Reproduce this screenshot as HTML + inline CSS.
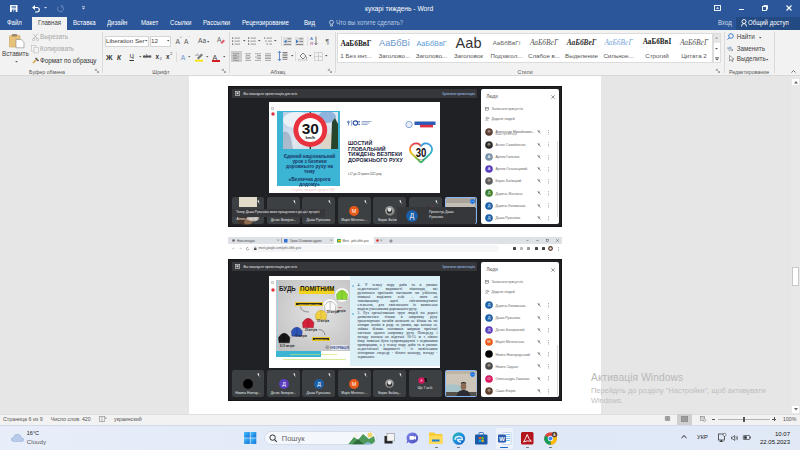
<!DOCTYPE html>
<html><head><meta charset="utf-8">
<style>
*{margin:0;padding:0;box-sizing:border-box}
html,body{width:800px;height:450px;overflow:hidden;background:#e6e6e6;font-family:"Liberation Sans",sans-serif}
.a{position:absolute}
.t{position:absolute;white-space:nowrap;line-height:1}
svg{overflow:visible}
</style></head><body>
<div class="a" style="left:0px;top:0px;width:800px;height:30px;background:#2b579a;"></div>
<svg class="a" style="left:10.2px;top:4.5px;" width="7.5" height="7" viewBox="0 0 7.5 7"><rect x="0" y="0" width="7.5" height="7" rx="0.4" fill="#fff"/><rect x="1.5" y="0.8" width="4.5" height="2.6" fill="#7f9cc8"/><rect x="1.8" y="4.6" width="3.9" height="2.4" fill="#2b579a"/><rect x="3.2" y="5.2" width="1" height="1.2" fill="#fff"/></svg>
<svg class="a" style="left:32px;top:5px;" width="9" height="7" viewBox="0 0 9 7"><path d="M1.5 2.5 H5.5 A2.3 2.3 0 0 1 5.5 7 H3" fill="none" stroke="#fff" stroke-width="1.2"/><path d="M0 2.5 L3 0 L3 5 Z" fill="#fff"/></svg>
<svg class="a" style="left:44px;top:7px;" width="3" height="2" viewBox="0 0 3 2"><path d="M0 0 H3 L1.5 1.6Z" fill="#dfe6f1"/></svg>
<svg class="a" style="left:57px;top:5px;" width="7" height="7" viewBox="0 0 7 7"><path d="M4.8 1.2 A2.9 2.9 0 1 1 1.6 1.6" fill="none" stroke="#6f8fbf" stroke-width="0.9"/><path d="M4 0 L6.2 1 L4.6 2.8Z" fill="#6f8fbf"/></svg>
<svg class="a" style="left:82px;top:6px;" width="3" height="4" viewBox="0 0 3 4"><rect x="0" y="0" width="3" height="0.6" fill="#dfe6f1"/><path d="M0 1.8 H3 L1.5 3.4Z" fill="#dfe6f1"/></svg>
<div class="t" style="left:365px;top:6.13px;font-size:6.7px;color:#fff;">кухарі тиждень - Word</div>
<svg class="a" style="left:714px;top:5px;" width="7" height="6" viewBox="0 0 7 6"><rect x="0.5" y="0.5" width="6" height="5" fill="none" stroke="#fff" stroke-width="0.9"/><path d="M2 3.8 L3.5 2 L5 3.8Z" fill="#fff"/></svg>
<div class="a" style="left:739px;top:9px;width:5px;height:1px;background:#fff;"></div>
<svg class="a" style="left:762px;top:5px;" width="6" height="6" viewBox="0 0 6 6"><rect x="0.5" y="1.5" width="4" height="4" fill="none" stroke="#fff" stroke-width="0.9"/><path d="M1.5 0.5 H5.5 V4.5" fill="none" stroke="#fff" stroke-width="0.9"/></svg>
<svg class="a" style="left:786px;top:5px;" width="6" height="6" viewBox="0 0 6 6"><path d="M0.5 0.5 L5.5 5.5 M5.5 0.5 L0.5 5.5" stroke="#fff" stroke-width="1.1"/></svg>
<div class="t" style="left:7px;top:20.41px;font-size:6.6px;color:#fff;;transform:scaleX(0.92);transform-origin:0 0">Файл</div>
<div class="a" style="left:32px;top:17px;width:35px;height:13px;background:#f2f2f2;"></div>
<div class="t" style="left:37.5px;top:20.41px;font-size:6.6px;color:#444;;transform:scaleX(0.92);transform-origin:0 0">Главная</div>
<div class="t" style="left:73px;top:20.41px;font-size:6.6px;color:#fff;;transform:scaleX(0.92);transform-origin:0 0">Вставка</div>
<div class="t" style="left:107px;top:20.41px;font-size:6.6px;color:#fff;;transform:scaleX(0.92);transform-origin:0 0">Дизайн</div>
<div class="t" style="left:141px;top:20.41px;font-size:6.6px;color:#fff;;transform:scaleX(0.92);transform-origin:0 0">Макет</div>
<div class="t" style="left:170px;top:20.41px;font-size:6.6px;color:#fff;;transform:scaleX(0.92);transform-origin:0 0">Ссылки</div>
<div class="t" style="left:203px;top:20.41px;font-size:6.6px;color:#fff;;transform:scaleX(0.92);transform-origin:0 0">Рассылки</div>
<div class="t" style="left:242px;top:20.41px;font-size:6.6px;color:#fff;;transform:scaleX(0.92);transform-origin:0 0">Рецензирование</div>
<div class="t" style="left:304px;top:20.41px;font-size:6.6px;color:#fff;;transform:scaleX(0.92);transform-origin:0 0">Вид</div>
<svg class="a" style="left:329px;top:20px;" width="5" height="7" viewBox="0 0 5 7"><circle cx="2.5" cy="2.3" r="2" fill="none" stroke="#cfdaea" stroke-width="0.8"/><path d="M1.5 4.5 V6 H3.5 V4.5" fill="none" stroke="#cfdaea" stroke-width="0.8"/></svg>
<div class="t" style="left:336px;top:20.41px;font-size:6.6px;color:#b9c9e2;;transform:scaleX(0.92);transform-origin:0 0">Что вы хотите сделать?</div>
<div class="t" style="left:718px;top:20.41px;font-size:6.6px;color:#d0dbec;;transform:scaleX(0.92);transform-origin:0 0">Вход</div>
<div class="a" style="left:736px;top:17px;width:64px;height:13px;background:#244a83;"></div>
<svg class="a" style="left:741px;top:19px;" width="6" height="8" viewBox="0 0 6 8"><circle cx="3" cy="2.5" r="2" fill="none" stroke="#fff" stroke-width="0.9"/><path d="M0.5 7.5 Q0.5 4.6 3 4.6 Q5.5 4.6 5.5 7.5" fill="none" stroke="#fff" stroke-width="0.9"/></svg>
<div class="t" style="left:748px;top:20.41px;font-size:6.6px;color:#fff;;transform:scaleX(0.92);transform-origin:0 0">Общий доступ</div>
<div class="a" style="left:0px;top:30px;width:800px;height:46px;background:#f2f2f2;"></div>
<div class="a" style="left:0px;top:75.2px;width:800px;height:0.9px;background:#d9d9d9;"></div>
<div class="a" style="left:101.5px;top:32px;width:1px;height:41px;background:#dadada;"></div>
<div class="a" style="left:228.5px;top:32px;width:1px;height:41px;background:#dadada;"></div>
<div class="a" style="left:334.5px;top:32px;width:1px;height:41px;background:#dadada;"></div>
<div class="a" style="left:723.5px;top:32px;width:1px;height:41px;background:#dadada;"></div>
<div class="a" style="left:774px;top:32px;width:1px;height:41px;background:#dadada;"></div>
<div class="t" style="left:-453.2px;width:1000px;text-align:center;top:69.99px;font-size:5.8px;color:#555;;transform:scaleX(0.91);transform-origin:500px 0">Буфер обмена</div>
<div class="t" style="left:-339px;width:1000px;text-align:center;top:69.99px;font-size:5.8px;color:#555;;transform:scaleX(0.91);transform-origin:500px 0">Шрифт</div>
<div class="t" style="left:-222px;width:1000px;text-align:center;top:69.99px;font-size:5.8px;color:#555;;transform:scaleX(0.91);transform-origin:500px 0">Абзац</div>
<div class="t" style="left:25px;width:1000px;text-align:center;top:69.99px;font-size:5.8px;color:#555;;transform:scaleX(0.91);transform-origin:500px 0">Стили</div>
<div class="t" style="left:249px;width:1000px;text-align:center;top:69.99px;font-size:5.8px;color:#555;;transform:scaleX(0.91);transform-origin:500px 0">Редактирование</div>
<svg class="a" style="left:95px;top:69px;" width="4" height="4" viewBox="0 0 4 4"><path d="M0.3 0.3 H2 M0.3 0.3 V2 M1 1 L3.5 3.5 M3.5 2 V3.5 H2" fill="none" stroke="#777" stroke-width="0.6"/></svg>
<svg class="a" style="left:222px;top:69px;" width="4" height="4" viewBox="0 0 4 4"><path d="M0.3 0.3 H2 M0.3 0.3 V2 M1 1 L3.5 3.5 M3.5 2 V3.5 H2" fill="none" stroke="#777" stroke-width="0.6"/></svg>
<svg class="a" style="left:328px;top:69px;" width="4" height="4" viewBox="0 0 4 4"><path d="M0.3 0.3 H2 M0.3 0.3 V2 M1 1 L3.5 3.5 M3.5 2 V3.5 H2" fill="none" stroke="#777" stroke-width="0.6"/></svg>
<svg class="a" style="left:716px;top:69px;" width="4" height="4" viewBox="0 0 4 4"><path d="M0.3 0.3 H2 M0.3 0.3 V2 M1 1 L3.5 3.5 M3.5 2 V3.5 H2" fill="none" stroke="#777" stroke-width="0.6"/></svg>
<svg class="a" style="left:9px;top:33px;" width="16" height="15" viewBox="0 0 16 15"><rect x="0.5" y="2.5" width="10.5" height="11.5" rx="0.8" fill="#e8c27a" stroke="#c9a45e" stroke-width="0.6"/><rect x="3" y="1" width="5" height="2.6" rx="0.6" fill="#9b8a6a"/><path d="M7 6.5 H12.3 L15 9.2 V14.8 H7 Z" fill="#fff" stroke="#888" stroke-width="0.6"/></svg>
<div class="t" style="left:2px;top:51.27px;font-size:6.3px;color:#444;">Вставить</div>
<svg class="a" style="left:15px;top:61.2px;" width="3" height="2" viewBox="0 0 3 2"><path d="M0 0 H3 L1.5 1.6Z" fill="#666"/></svg>
<svg class="a" style="left:31.5px;top:33px;" width="7" height="8" viewBox="0 0 7 8"><path d="M1 0.5 L5.5 6 M6 0.5 L1.5 6" stroke="#aaa" stroke-width="0.7"/><circle cx="1.5" cy="6.5" r="1.2" fill="none" stroke="#aaa" stroke-width="0.6"/><circle cx="5.5" cy="6.5" r="1.2" fill="none" stroke="#aaa" stroke-width="0.6"/></svg>
<div class="t" style="left:40px;top:34.47px;font-size:6.3px;color:#a6a6a6;">Вырезать</div>
<svg class="a" style="left:31px;top:45px;" width="8" height="8" viewBox="0 0 8 8"><rect x="0.5" y="0.5" width="4.5" height="5.5" fill="#f3f3f3" stroke="#bbb" stroke-width="0.6"/><rect x="3" y="2.5" width="4.5" height="5.5" fill="#f3f3f3" stroke="#bbb" stroke-width="0.6"/></svg>
<div class="t" style="left:40px;top:46.47px;font-size:6.3px;color:#a6a6a6;">Копировать</div>
<svg class="a" style="left:31.5px;top:57px;" width="7" height="7" viewBox="0 0 7 7"><path d="M1 6 L4 3" stroke="#d8a640" stroke-width="1.6"/><path d="M3.5 1 L6.5 4" stroke="#555" stroke-width="1.5"/></svg>
<div class="t" style="left:40px;top:58.47px;font-size:6.3px;color:#333;">Формат по образцу</div>
<div class="a" style="left:104.5px;top:36px;width:44px;height:10.5px;background:#fff;border:1px solid #d4d4d4"></div>
<div class="t" style="left:106px;top:38.45px;font-size:6.2px;color:#444;">Liberation Ser</div>
<svg class="a" style="left:145px;top:40px;" width="2.5" height="2" viewBox="0 0 2.5 2"><path d="M0 0 H2.5 L1.25 1.4Z" fill="#555"/></svg>
<div class="a" style="left:149.5px;top:36px;width:21px;height:10.5px;background:#fff;border:1px solid #d4d4d4"></div>
<div class="t" style="left:151px;top:38.45px;font-size:6.2px;color:#444;">12</div>
<svg class="a" style="left:167px;top:40px;" width="2.5" height="2" viewBox="0 0 2.5 2"><path d="M0 0 H2.5 L1.25 1.4Z" fill="#555"/></svg>
<div class="t" style="left:175.5px;top:39.01px;font-size:6.6px;color:#555;">A</div>
<div class="t" style="left:180px;top:37.24px;font-size:3.5px;color:#555;">^</div>
<div class="t" style="left:184px;top:39.01px;font-size:6.6px;color:#555;">A</div>
<div class="t" style="left:188.6px;top:37.24px;font-size:3.5px;color:#555;">ˇ</div>
<div class="t" style="left:198px;top:38.41px;font-size:6.6px;color:#555;">Aa</div>
<svg class="a" style="left:206.5px;top:40.5px;" width="2.5" height="2" viewBox="0 0 2.5 2"><path d="M0 0 H2.5 L1.25 1.4Z" fill="#555"/></svg>
<svg class="a" style="left:217px;top:36px;" width="8" height="9" viewBox="0 0 8 9"><text x="0" y="6" font-size="6.5" font-family="Liberation Sans" fill="#666">A</text><path d="M3.5 6.5 L6.5 3.5 L8 5 L5 8Z" fill="#e0606a"/></svg>
<div class="t" style="left:106px;top:54.01px;font-size:7.2px;color:#333;font-weight:bold">Ж</div>
<div class="t" style="left:117px;top:54.51px;font-size:6.6px;color:#333;font-weight:bold;font-style:italic">К</div>
<div class="t" style="left:129.5px;top:54.01px;font-size:6.6px;color:#333;text-decoration:underline">Ч</div>
<svg class="a" style="left:138.5px;top:56.2px;" width="2.5" height="2" viewBox="0 0 2.5 2"><path d="M0 0 H2.5 L1.25 1.4Z" fill="#666"/></svg>
<div class="t" style="left:143px;top:55.24px;font-size:4.8px;color:#555;text-decoration:line-through;font-weight:bold">abc</div>
<div class="t" style="left:155.5px;top:54.47px;font-size:6.3px;color:#333;font-weight:bold">x</div>
<div class="t" style="left:159.8px;top:57.84px;font-size:3.5px;color:#333;">2</div>
<div class="t" style="left:166px;top:54.47px;font-size:6.3px;color:#333;font-weight:bold">x</div>
<div class="t" style="left:170.3px;top:52.84px;font-size:3.5px;color:#333;">2</div>
<div class="a" style="left:175.5px;top:52.2px;width:1px;height:10px;background:#dcdcdc;"></div>
<div class="t" style="left:180.5px;top:54.37px;font-size:7px;color:#8fb2dd;font-weight:bold">A</div>
<svg class="a" style="left:188px;top:56.2px;" width="2.5" height="2" viewBox="0 0 2.5 2"><path d="M0 0 H2.5 L1.25 1.4Z" fill="#666"/></svg>
<svg class="a" style="left:195px;top:52.2px;" width="9" height="10" viewBox="0 0 9 10"><path d="M2 6 L6.5 1.5 L8 3 L3.5 7.5Z" fill="#777"/><text x="0" y="4" font-size="3.5" font-family="Liberation Sans" fill="#888">ab</text><rect x="0" y="7.8" width="8" height="1.8" fill="#f5e400"/></svg>
<svg class="a" style="left:205.5px;top:56.2px;" width="2.5" height="2" viewBox="0 0 2.5 2"><path d="M0 0 H2.5 L1.25 1.4Z" fill="#666"/></svg>
<div class="t" style="left:212.5px;top:53.67px;font-size:7px;color:#444;">A</div>
<div class="a" style="left:212px;top:60.4px;width:8px;height:1.6px;background:#d42020;"></div>
<svg class="a" style="left:222.5px;top:56.2px;" width="2.5" height="2" viewBox="0 0 2.5 2"><path d="M0 0 H2.5 L1.25 1.4Z" fill="#666"/></svg>
<svg class="a" style="left:232px;top:37px;" width="9" height="8" viewBox="0 0 9 8"><rect x="0" y="0.5" width="1.2" height="1.2" fill="#555"/><rect x="2.5" y="0.7" width="5.5" height="0.7" fill="#777"/><rect x="0" y="3.5" width="1.2" height="1.2" fill="#555"/><rect x="2.5" y="3.7" width="5.5" height="0.7" fill="#777"/><rect x="0" y="6.5" width="1.2" height="1.2" fill="#555"/><rect x="2.5" y="6.7" width="5.5" height="0.7" fill="#777"/></svg>
<svg class="a" style="left:242.5px;top:40px;" width="2.5" height="2" viewBox="0 0 2.5 2"><path d="M0 0 H2.5 L1.25 1.4Z" fill="#555"/></svg>
<svg class="a" style="left:248px;top:37px;" width="9" height="8" viewBox="0 0 9 8"><rect x="0" y="0.4" width="1.2" height="1.4" fill="#666"/><rect x="2.5" y="0.7" width="5.5" height="0.7" fill="#777"/><rect x="0" y="3.4" width="1.2" height="1.4" fill="#666"/><rect x="2.5" y="3.7" width="5.5" height="0.7" fill="#777"/><rect x="0" y="6.4" width="1.2" height="1.4" fill="#666"/><rect x="2.5" y="6.7" width="5.5" height="0.7" fill="#777"/></svg>
<svg class="a" style="left:258px;top:40px;" width="2.5" height="2" viewBox="0 0 2.5 2"><path d="M0 0 H2.5 L1.25 1.4Z" fill="#555"/></svg>
<svg class="a" style="left:264px;top:37px;" width="9" height="8" viewBox="0 0 9 8"><rect x="0.0" y="0.5" width="1.2" height="1.2" fill="#777"/><rect x="2.5" y="0.7" width="5.5" height="0.7" fill="#777"/><rect x="1.3" y="3.5" width="1.2" height="1.2" fill="#777"/><rect x="3.8" y="3.7" width="4.2" height="0.7" fill="#777"/><rect x="2.6" y="6.5" width="1.2" height="1.2" fill="#777"/><rect x="5.1" y="6.7" width="2.9" height="0.7" fill="#777"/></svg>
<svg class="a" style="left:274px;top:40px;" width="2.5" height="2" viewBox="0 0 2.5 2"><path d="M0 0 H2.5 L1.25 1.4Z" fill="#555"/></svg>
<div class="a" style="left:280.5px;top:36px;width:1px;height:10px;background:#dcdcdc;"></div>
<div class="a" style="left:283px;top:36.5px;width:9px;height:9px;background:#dedede;"></div>
<svg class="a" style="left:284px;top:37.5px;" width="7" height="7" viewBox="0 0 7 7"><path d="M0 3.5 L2.5 1.8 V5.2Z" fill="#2e6fc0"/><rect x="3.5" y="0.5" width="3.5" height="0.7" fill="#666"/><rect x="3.5" y="3" width="3.5" height="0.7" fill="#666"/><rect x="0" y="6" width="7" height="0.7" fill="#666"/></svg>
<div class="a" style="left:294.5px;top:36.5px;width:9px;height:9px;background:#dedede;"></div>
<svg class="a" style="left:295.5px;top:37.5px;" width="7" height="7" viewBox="0 0 7 7"><path d="M2.5 3.5 L0 1.8 V5.2Z" fill="#2e6fc0"/><rect x="3.5" y="0.5" width="3.5" height="0.7" fill="#666"/><rect x="3.5" y="3" width="3.5" height="0.7" fill="#666"/><rect x="0" y="6" width="7" height="0.7" fill="#666"/></svg>
<div class="a" style="left:306.5px;top:36px;width:1px;height:10px;background:#dcdcdc;"></div>
<svg class="a" style="left:310px;top:36px;" width="8" height="10" viewBox="0 0 8 10"><text x="0" y="4.3" font-size="4.3" font-family="Liberation Sans" fill="#3a6fbf">A</text><text x="0" y="9" font-size="4.3" font-family="Liberation Sans" fill="#a0338f">Я</text><path d="M6 0.5 V8.5 M4.6 7 L6 8.8 L7.4 7" fill="none" stroke="#555" stroke-width="0.7"/></svg>
<div class="t" style="left:325.5px;top:38.07px;font-size:7px;color:#555;">¶</div>
<div class="a" style="left:230.5px;top:51px;width:11px;height:10.5px;background:#cdcdcd;"></div>
<svg class="a" style="left:233px;top:52.5px;" width="6" height="8" viewBox="0 0 6 8"><rect x="0" y="0.5" width="6" height="0.7" fill="#888"/><rect x="0" y="2.1" width="4" height="0.7" fill="#888"/><rect x="0" y="3.7" width="6" height="0.7" fill="#888"/><rect x="0" y="5.300000000000001" width="4" height="0.7" fill="#888"/><rect x="0" y="6.9" width="6" height="0.7" fill="#888"/></svg>
<svg class="a" style="left:244.5px;top:52.5px;" width="6" height="8" viewBox="0 0 6 8"><rect x="0.0" y="0.5" width="6" height="0.7" fill="#888"/><rect x="1.0" y="2.1" width="4" height="0.7" fill="#888"/><rect x="0.0" y="3.7" width="6" height="0.7" fill="#888"/><rect x="1.0" y="5.300000000000001" width="4" height="0.7" fill="#888"/><rect x="0.0" y="6.9" width="6" height="0.7" fill="#888"/></svg>
<svg class="a" style="left:254.5px;top:52.5px;" width="6" height="8" viewBox="0 0 6 8"><rect x="0" y="0.5" width="6" height="0.7" fill="#888"/><rect x="2" y="2.1" width="4" height="0.7" fill="#888"/><rect x="0" y="3.7" width="6" height="0.7" fill="#888"/><rect x="2" y="5.300000000000001" width="4" height="0.7" fill="#888"/><rect x="0" y="6.9" width="6" height="0.7" fill="#888"/></svg>
<svg class="a" style="left:265px;top:52.5px;" width="6" height="8" viewBox="0 0 6 8"><rect x="0" y="0.5" width="6" height="0.7" fill="#888"/><rect x="0" y="2.1" width="6" height="0.7" fill="#888"/><rect x="0" y="3.7" width="6" height="0.7" fill="#888"/><rect x="0" y="5.300000000000001" width="6" height="0.7" fill="#888"/><rect x="0" y="6.9" width="6" height="0.7" fill="#888"/></svg>
<svg class="a" style="left:278px;top:51px;" width="12" height="10" viewBox="0 0 12 10"><path d="M1.5 0.5 V9.5 M0 2 L1.5 0.3 L3 2 M0 8 L1.5 9.7 L3 8" fill="none" stroke="#3a6fbf" stroke-width="0.8"/><rect x="4.5" y="1.0" width="5" height="0.8" fill="#666"/><rect x="4.5" y="2.7" width="5" height="0.8" fill="#666"/><rect x="4.5" y="4.4" width="5" height="0.8" fill="#666"/><rect x="4.5" y="6.1" width="5" height="0.8" fill="#666"/><rect x="4.5" y="7.8" width="5" height="0.8" fill="#666"/></svg>
<svg class="a" style="left:290.5px;top:55px;" width="2.5" height="2" viewBox="0 0 2.5 2"><path d="M0 0 H2.5 L1.25 1.4Z" fill="#555"/></svg>
<div class="a" style="left:294.5px;top:51px;width:1px;height:10px;background:#dcdcdc;"></div>
<svg class="a" style="left:298px;top:51px;" width="10" height="10" viewBox="0 0 10 10"><path d="M2 5 L5 2 L8 5 L5 8Z" fill="none" stroke="#666" stroke-width="0.8"/><path d="M8 5.5 Q9 7 8.3 7.8" fill="none" stroke="#666" stroke-width="0.7"/><rect x="0.5" y="8.7" width="8.5" height="1.2" fill="#fff" stroke="#aaa" stroke-width="0.4"/></svg>
<svg class="a" style="left:309px;top:55px;" width="2.5" height="2" viewBox="0 0 2.5 2"><path d="M0 0 H2.5 L1.25 1.4Z" fill="#555"/></svg>
<svg class="a" style="left:314px;top:51.5px;" width="9" height="9" viewBox="0 0 9 9"><rect x="0.5" y="0.5" width="8" height="8" fill="none" stroke="#999" stroke-width="0.6" stroke-dasharray="0.8 0.6"/><path d="M4.5 0.5 V8.5 M0.5 4.5 H8.5" stroke="#999" stroke-width="0.6" stroke-dasharray="0.8 0.6"/></svg>
<svg class="a" style="left:325px;top:55px;" width="2.5" height="2" viewBox="0 0 2.5 2"><path d="M0 0 H2.5 L1.25 1.4Z" fill="#555"/></svg>
<div class="a" style="left:336.5px;top:32.5px;width:376px;height:30.5px;background:#fff;border:1px solid #dcdcdc"></div>
<div class="a" style="left:712.5px;top:32.5px;width:8px;height:30.5px;background:#fff;border:1px solid #dcdcdc"></div>
<div class="a" style="left:713.5px;top:33.5px;width:6px;height:9px;background:#e6e6e6;"></div>
<svg class="a" style="left:715px;top:37px;" width="3" height="2" viewBox="0 0 3 2"><path d="M0 1.6 H3 L1.5 0Z" fill="#888"/></svg>
<svg class="a" style="left:715px;top:48px;" width="3" height="2" viewBox="0 0 3 2"><path d="M0 0 H3 L1.5 1.6Z" fill="#555"/></svg>
<svg class="a" style="left:714.5px;top:57px;" width="4" height="4" viewBox="0 0 4 4"><rect x="0" y="0" width="4" height="0.6" fill="#555"/><path d="M0 1.6 H4 L2 3.4Z" fill="#555"/></svg>
<div class="t" style="left:-144px;width:1000px;text-align:center;top:39.54px;font-size:7.4px;color:#333;font-family:'Liberation Serif';font-weight:bold;color:#222">АаБбВвГ</div>
<div class="t" style="left:-144px;width:1000px;text-align:center;top:53.15px;font-size:6.2px;color:#555;">1 Без инт...</div>
<div class="t" style="left:-105.69999999999999px;width:1000px;text-align:center;top:39.21px;font-size:9.2px;color:#333;color:#6a96c8">АаБбВі</div>
<div class="t" style="left:-105.69999999999999px;width:1000px;text-align:center;top:53.15px;font-size:6.2px;color:#555;">Заголово...</div>
<div class="t" style="left:-68.5px;width:1000px;text-align:center;top:39.71px;font-size:7.2px;color:#333;color:#5b9bd5">АаБбВвГ</div>
<div class="t" style="left:-68.5px;width:1000px;text-align:center;top:53.15px;font-size:6.2px;color:#555;">Заголово...</div>
<div class="t" style="left:-31.5px;width:1000px;text-align:center;top:36.03px;font-size:14.5px;color:#333;color:#333">Ааb</div>
<div class="t" style="left:-31.5px;width:1000px;text-align:center;top:53.15px;font-size:6.2px;color:#555;">Заголовок</div>
<div class="t" style="left:6.5px;width:1000px;text-align:center;top:40.25px;font-size:6.2px;color:#333;color:#666">АаБбВвГї</div>
<div class="t" style="left:6.5px;width:1000px;text-align:center;top:53.15px;font-size:6.2px;color:#555;">Подзагол...</div>
<div class="t" style="left:44px;width:1000px;text-align:center;top:39.24px;font-size:7.4px;color:#333;font-family:'Liberation Serif';font-style:italic;color:#555">АаБбВеГ</div>
<div class="t" style="left:44px;width:1000px;text-align:center;top:53.15px;font-size:6.2px;color:#555;">Слабое в...</div>
<div class="t" style="left:81.5px;width:1000px;text-align:center;top:39.24px;font-size:7.4px;color:#333;font-family:'Liberation Serif';font-style:italic;font-weight:bold;color:#333">АаБбВеГ</div>
<div class="t" style="left:81.5px;width:1000px;text-align:center;top:53.15px;font-size:6.2px;color:#555;">Выделение</div>
<div class="t" style="left:118.5px;width:1000px;text-align:center;top:39.24px;font-size:7.4px;color:#333;font-family:'Liberation Serif';font-style:italic;color:#7aa7d8">АаБбВеГ</div>
<div class="t" style="left:118.5px;width:1000px;text-align:center;top:53.15px;font-size:6.2px;color:#555;">Сильное...</div>
<div class="t" style="left:157px;width:1000px;text-align:center;top:39.41px;font-size:7.2px;color:#333;font-family:'Liberation Serif';font-weight:bold;color:#222">АаБбВвІ</div>
<div class="t" style="left:157px;width:1000px;text-align:center;top:53.15px;font-size:6.2px;color:#555;">Строгий</div>
<div class="t" style="left:194px;width:1000px;text-align:center;top:39.24px;font-size:7.4px;color:#333;font-family:'Liberation Serif';font-style:italic;color:#555">АаБбВеГ</div>
<div class="t" style="left:194px;width:1000px;text-align:center;top:53.15px;font-size:6.2px;color:#555;">Цитата 2</div>
<svg class="a" style="left:727px;top:33.2px;" width="7" height="7" viewBox="0 0 7 7"><circle cx="4" cy="3" r="2.3" fill="none" stroke="#2e6fc0" stroke-width="0.9"/><path d="M2.4 4.6 L0.5 6.5" stroke="#2e6fc0" stroke-width="1"/></svg>
<div class="t" style="left:736.7px;top:34.47px;font-size:6.3px;color:#444;">Найти</div>
<svg class="a" style="left:759px;top:36.5px;" width="2.5" height="2" viewBox="0 0 2.5 2"><path d="M0 0 H2.5 L1.25 1.4Z" fill="#555"/></svg>
<svg class="a" style="left:727px;top:44.5px;" width="8" height="7" viewBox="0 0 8 7"><text x="0" y="4" font-size="4" font-family="Liberation Sans" fill="#3a6fbf">ab</text><path d="M1 5 H6 M4.5 4 L6 5 L4.5 6" fill="none" stroke="#777" stroke-width="0.6"/></svg>
<div class="t" style="left:736.7px;top:45.67px;font-size:6.3px;color:#444;">Заменить</div>
<svg class="a" style="left:728.5px;top:55px;" width="6" height="7" viewBox="0 0 6 7"><path d="M0.5 0.5 V6 L2 4.6 L3.2 6.8 L4 6.4 L3 4.3 L5 4.2Z" fill="#fff" stroke="#666" stroke-width="0.6"/></svg>
<div class="t" style="left:736.7px;top:56.47px;font-size:6.3px;color:#444;">Выделить</div>
<svg class="a" style="left:766px;top:58.5px;" width="2.5" height="2" viewBox="0 0 2.5 2"><path d="M0 0 H2.5 L1.25 1.4Z" fill="#555"/></svg>
<svg class="a" style="left:791px;top:70px;" width="5" height="3" viewBox="0 0 5 3"><path d="M0.5 2.5 L2.5 0.5 L4.5 2.5" fill="none" stroke="#555" stroke-width="0.8"/></svg>
<div class="a" style="left:0px;top:76px;width:800px;height:338px;background:#e6e6e6;"></div>
<div class="a" style="left:189px;top:76px;width:412px;height:338px;background:#fff;"></div>
<div class="a" style="left:791px;top:76px;width:9px;height:338px;background:#e8e8e8;"></div>
<div class="a" style="left:792px;top:78.5px;width:7px;height:6.5px;background:#fff;"></div>
<svg class="a" style="left:793.5px;top:80.5px;" width="4" height="3" viewBox="0 0 4 3"><path d="M0 2.5 H4 L2 0Z" fill="#666"/></svg>
<div class="a" style="left:792px;top:266.5px;width:7px;height:19.5px;background:#fff;border:1px solid #c8c8c8"></div>
<div class="a" style="left:792px;top:405.5px;width:7px;height:7px;background:#fff;"></div>
<svg class="a" style="left:793.5px;top:407.5px;" width="4" height="3" viewBox="0 0 4 3"><path d="M0 0 H4 L2 2.5Z" fill="#666"/></svg>
<div class="a" style="left:228px;top:86px;width:334px;height:141px;background:#202124;border:1px solid #131416"></div>
<div class="a" style="left:232px;top:89px;width:245px;height:9px;background:#35373a;border-radius:1px"></div>
<svg class="a" style="left:235px;top:91px;" width="5" height="5" viewBox="0 0 5 5"><rect x="0.3" y="0.3" width="4.4" height="4" fill="none" stroke="#ddd" stroke-width="0.6"/><rect x="1.5" y="1.3" width="2" height="2" fill="#ddd"/></svg>
<div class="t" style="left:243.5px;top:92.81px;font-size:3.3px;color:#e8eaed;">Вы показуєте презентацію для всіх</div>
<div class="t" style="left:-525px;width:1000px;text-align:right;top:92.69px;font-size:3.2px;color:#a8c7fa;">Зупинити презентацію</div>
<div class="a" style="left:268.5px;top:102px;width:171px;height:91px;background:#fff;"></div>
<div class="a" style="left:271px;top:106.5px;width:3px;height:3px;background:#eee;border:0.5px solid #ccc"></div>
<svg class="a" style="left:270.5px;top:111.5px;" width="4" height="4" viewBox="0 0 4 4"><circle cx="2" cy="2" r="1.7" fill="#e0323c"/></svg>
<div class="a" style="left:277.2px;top:111px;width:63.3px;height:75px;background:#3cb4d4;"></div>
<svg class="a" style="left:282.5px;top:112px;" width="55" height="37" viewBox="0 0 55 37"><defs><linearGradient id="sky" x1="0" y1="0" x2="1" y2="1"><stop offset="0" stop-color="#b8cde6"/><stop offset="0.5" stop-color="#dfe7f0"/><stop offset="1" stop-color="#c9d2dc"/></linearGradient></defs>
<rect width="55" height="37" fill="url(#sky)"/>
<ellipse cx="14" cy="8" rx="14" ry="8" fill="#f1f4f8" opacity="0.9"/><ellipse cx="44" cy="5" rx="9" ry="6" fill="#6f9fd6" opacity="0.7"/>
<path d="M0 37 V20 Q5 18 8 26 L10 37Z" fill="#8aa0b8" opacity="0.6"/>
<rect x="38" y="22" width="12" height="15" fill="#ddd6c8"/>
<path d="M48 37 L49 10 L52 6 L55 12 V37Z" fill="#27452b"/>
<rect x="26.6" y="0" width="1.4" height="37" fill="#333"/>
<circle cx="27.3" cy="18" r="16.9" fill="#e8323e"/><circle cx="27.3" cy="18" r="12" fill="#fff"/>
<text x="27.3" y="22" font-size="15.5" text-anchor="middle" font-family="Liberation Sans" font-weight="bold" fill="#151515">30</text>
<text x="27.3" y="26.8" font-size="4.2" text-anchor="middle" font-family="Liberation Sans" font-weight="bold" fill="#151515">km/h</text></svg>
<div class="t" style="left:-190.5px;width:1000px;text-align:center;top:155.42px;font-size:4.7px;color:#1a3566;font-weight:bold">Єдиний національний</div>
<div class="t" style="left:-190.5px;width:1000px;text-align:center;top:160.42px;font-size:4.7px;color:#1a3566;font-weight:bold">урок з безпеки</div>
<div class="t" style="left:-190.5px;width:1000px;text-align:center;top:165.42px;font-size:4.7px;color:#1a3566;font-weight:bold">дорожнього руху на</div>
<div class="t" style="left:-190.5px;width:1000px;text-align:center;top:170.42px;font-size:4.7px;color:#1a3566;font-weight:bold">тему</div>
<div class="t" style="left:-190.5px;width:1000px;text-align:center;top:177.52px;font-size:4.7px;color:#1a3566;font-weight:bold">«Безпечна дорога</div>
<div class="t" style="left:-190.5px;width:1000px;text-align:center;top:182.52px;font-size:4.7px;color:#1a3566;font-weight:bold">додому»</div>
<div class="t" style="left:-187px;width:1000px;text-align:center;top:188.76px;font-size:3px;color:#eec5cc;">Сторінка предмета уроку з ПДР</div>
<svg class="a" style="left:347px;top:120px;" width="30" height="7" viewBox="0 0 30 7"><path d="M1.5 0.5 V5.5 M0 1 Q1.5 6 3 1" fill="none" stroke="#2b4ea0" stroke-width="0.6"/><rect x="4.6" y="0" width="0.5" height="6" fill="#2b4ea0"/><circle cx="8.5" cy="3" r="2.2" fill="none" stroke="#2b4ea0" stroke-width="1.2"/><rect x="11.5" y="1" width="1.3" height="1.3" fill="#2b4ea0"/><rect x="11.5" y="3.8" width="1.3" height="1.3" fill="#2b4ea0"/><rect x="14.5" y="1" width="10" height="0.8" fill="#8a9ac8"/><rect x="14.5" y="2.6" width="8" height="0.8" fill="#8a9ac8"/><rect x="14.5" y="4.2" width="6" height="0.8" fill="#8a9ac8"/></svg>
<svg class="a" style="left:404.5px;top:120.5px;" width="31" height="7" viewBox="0 0 31 7"><circle cx="4" cy="3.5" r="3.2" fill="#e8eef8" stroke="#5b8bd0" stroke-width="0.7"/><rect x="9.5" y="0.5" width="21" height="3.5" fill="#2a5bb8"/><rect x="15" y="3.8" width="13" height="2.6" fill="#e03040"/></svg>
<div class="t" style="left:348px;top:141.11px;font-size:5.3px;color:#1b2340;font-weight:bold;letter-spacing:0.05px">ШОСТИЙ</div>
<div class="t" style="left:348px;top:146.71px;font-size:5.3px;color:#1b2340;font-weight:bold;letter-spacing:0.05px">ГЛОБАЛЬНИЙ</div>
<div class="t" style="left:348px;top:152.31px;font-size:5.3px;color:#1b2340;font-weight:bold;letter-spacing:0.05px">ТИЖДЕНЬ БЕЗПЕКИ</div>
<div class="t" style="left:348px;top:157.91px;font-size:5.3px;color:#1b2340;font-weight:bold;letter-spacing:0.05px">ДОРОЖНЬОГО РУХУ</div>
<div class="t" style="left:348px;top:174.30px;font-size:2.6px;color:#444;">з 17 до 23 травня 2021 року</div>
<svg class="a" style="left:409px;top:141.5px;" width="24" height="22" viewBox="0 0 24 22"><defs><linearGradient id="hgl" x1="0" y1="0" x2="0" y2="1"><stop offset="0" stop-color="#e23a52"/><stop offset="0.5" stop-color="#f4c20d"/><stop offset="1" stop-color="#3cb060"/></linearGradient><linearGradient id="hgr" x1="0" y1="0" x2="0" y2="1"><stop offset="0" stop-color="#3a9ae0"/><stop offset="0.5" stop-color="#2fb7c8"/><stop offset="1" stop-color="#3cb060"/></linearGradient></defs><path d="M12 20.5 L3 12 Q0 8.5 1.5 5 Q4 0.8 8.5 1.5 Q11 2 12 4.5" fill="none" stroke="url(#hgl)" stroke-width="1.8"/><path d="M12 20.5 L21 12 Q24 8.5 22.5 5 Q20 0.8 15.5 1.5 Q13 2 12 4.5" fill="none" stroke="url(#hgr)" stroke-width="1.8"/><text x="15" y="15.5" font-size="12" text-anchor="middle" font-family="Liberation Sans" font-weight="bold" fill="#111" transform="scale(0.8,1)">30</text><text x="12" y="17.8" font-size="2" text-anchor="middle" font-family="Liberation Sans" fill="#444">РОКІВ</text></svg>
<div class="a" style="left:231.7px;top:196.7px;width:32.5px;height:27px;background:#3c4043;border-radius:2.5px"></div>
<svg class="a" style="left:257.2px;top:199.7px;" width="3" height="4" viewBox="0 0 3 4"><path d="M0.3 0.3 L2.7 3.7" stroke="#ddd" stroke-width="0.5"/><rect x="0.9" y="0.3" width="1.2" height="2.2" rx="0.6" fill="#e8e8e8"/></svg>
<div class="a" style="left:239px;top:197px;width:17.5px;height:9.5px;background:#e3dccb;"></div>
<div class="a" style="left:266.8px;top:196.7px;width:33px;height:27px;background:#3c4043;border-radius:2.5px"></div>
<svg class="a" style="left:292.8px;top:199.7px;" width="3" height="4" viewBox="0 0 3 4"><path d="M0.3 0.3 L2.7 3.7" stroke="#ddd" stroke-width="0.5"/><rect x="0.9" y="0.3" width="1.2" height="2.2" rx="0.6" fill="#e8e8e8"/></svg>
<div class="t" style="left:-216.7px;width:1000px;text-align:center;top:218.91px;font-size:3.3px;color:#e8eaed;">Денис Безкров...</div>
<div class="a" style="left:302px;top:196.7px;width:33px;height:27px;background:#3c4043;border-radius:2.5px"></div>
<svg class="a" style="left:328px;top:199.7px;" width="3" height="4" viewBox="0 0 3 4"><path d="M0.3 0.3 L2.7 3.7" stroke="#ddd" stroke-width="0.5"/><rect x="0.9" y="0.3" width="1.2" height="2.2" rx="0.6" fill="#e8e8e8"/></svg>
<div class="t" style="left:-181.5px;width:1000px;text-align:center;top:218.91px;font-size:3.3px;color:#e8eaed;">Даша Рузанова</div>
<div class="a" style="left:337.5px;top:196.7px;width:33px;height:27px;background:#3c4043;border-radius:2.5px"></div>
<svg class="a" style="left:363.5px;top:199.7px;" width="3" height="4" viewBox="0 0 3 4"><path d="M0.3 0.3 L2.7 3.7" stroke="#ddd" stroke-width="0.5"/><rect x="0.9" y="0.3" width="1.2" height="2.2" rx="0.6" fill="#e8e8e8"/></svg>
<svg class="a" style="left:349.3px;top:206.0px;" width="10" height="10" viewBox="0 0 10 10"><circle cx="5" cy="5" r="4.9" fill="#e8591a"/><text x="5" y="6.9" font-size="5.4" text-anchor="middle" font-family="Liberation Sans" fill="#fff">М</text></svg>
<div class="t" style="left:-146.0px;width:1000px;text-align:center;top:218.91px;font-size:3.3px;color:#e8eaed;">Марія Метельс...</div>
<div class="a" style="left:373px;top:196.7px;width:33px;height:27px;background:#3c4043;border-radius:2.5px"></div>
<svg class="a" style="left:399px;top:199.7px;" width="3" height="4" viewBox="0 0 3 4"><path d="M0.3 0.3 L2.7 3.7" stroke="#ddd" stroke-width="0.5"/><rect x="0.9" y="0.3" width="1.2" height="2.2" rx="0.6" fill="#e8e8e8"/></svg>
<svg class="a" style="left:384.8px;top:206.0px;" width="10" height="10" viewBox="0 0 10 10"><circle cx="5" cy="5" r="4.9" fill="#6d6d6d"/><text x="5" y="6.9" font-size="5.4" text-anchor="middle" font-family="Liberation Sans" fill="#fff"></text></svg>
<div class="t" style="left:-110.5px;width:1000px;text-align:center;top:218.91px;font-size:3.3px;color:#e8eaed;">Борис Бабиц...</div>
<svg class="a" style="left:384.5px;top:205.7px;" width="10" height="10" viewBox="0 0 10 10"><circle cx="4.5" cy="4.5" r="4.3" fill="#9a9a9a"/><circle cx="4.5" cy="5" r="2.6" fill="#2a2a2a"/><circle cx="4.5" cy="3.8" r="2" fill="#e0e0e0"/></svg>
<div class="a" style="left:408.5px;top:196.7px;width:33px;height:27px;background:#3c4043;border-radius:2.5px"></div>
<svg class="a" style="left:434.5px;top:199.7px;" width="3" height="4" viewBox="0 0 3 4"><path d="M0.3 0.3 L2.7 3.7" stroke="#ddd" stroke-width="0.5"/><rect x="0.9" y="0.3" width="1.2" height="2.2" rx="0.6" fill="#e8e8e8"/></svg>
<svg class="a" style="left:426px;top:205.7px;" width="10" height="6" viewBox="0 0 10 6"><circle cx="3" cy="3" r="2.5" fill="#222"/><circle cx="6.5" cy="3" r="2.5" fill="#d81b60"/></svg>
<svg class="a" style="left:236px;top:214px;" width="26" height="10" viewBox="0 0 26 10"><ellipse cx="9" cy="6" rx="8" ry="5" fill="#4a3428" opacity="0.9"/><ellipse cx="17" cy="4" rx="6" ry="3.5" fill="#d9d0c6" opacity="0.8"/><ellipse cx="12" cy="8" rx="4" ry="2.5" fill="#a07858" opacity="0.8"/></svg>
<div class="t" style="left:-252px;width:1000px;text-align:center;top:218.01px;font-size:3.3px;color:#e8eaed;">Александр М...</div>
<div class="a" style="left:232px;top:208.5px;width:93px;height:8px;background:#36373a;border-radius:1px"></div>
<div class="t" style="left:236px;top:211.29px;font-size:3.2px;color:#e8eaed;">Тепер Даша Рузанова може приєднатися до цієї зустрічі</div>
<div class="a" style="left:444.5px;top:196.7px;width:32.5px;height:27px;background:#3c4043;border:1px solid #8ab4f8;border-radius:1.5px"></div>
<svg class="a" style="left:446px;top:198px;" width="29.5" height="10" viewBox="0 0 29.5 10"><rect width="29.5" height="10" fill="#a9a39a"/><rect y="5" width="29.5" height="5" fill="#c4bfb6"/></svg>
<svg class="a" style="left:470px;top:198.5px;" width="5" height="5" viewBox="0 0 5 5"><circle cx="2.5" cy="2.5" r="2.4" fill="#1a73e8"/><circle cx="1.4" cy="2.5" r="0.35" fill="#fff"/><circle cx="2.5" cy="2.5" r="0.35" fill="#fff"/><circle cx="3.6" cy="2.5" r="0.35" fill="#fff"/></svg>
<div class="a" style="left:397px;top:207px;width:78px;height:17px;background:#36373a;"></div>
<svg class="a" style="left:406px;top:209.5px;" width="12" height="12" viewBox="0 0 12 12"><circle cx="6" cy="6" r="5.9" fill="#1c5fa8"/><text x="6" y="8.3" font-size="6.5" text-anchor="middle" font-family="Liberation Sans" fill="#fff">Д</text></svg>
<div class="t" style="left:429px;top:211.09px;font-size:3.2px;color:#e8eaed;">Презентує Даша</div>
<div class="t" style="left:429px;top:215.59px;font-size:3.2px;color:#e8eaed;">Рузанова</div>
<div class="a" style="left:480.5px;top:89.3px;width:78.5px;height:134.5px;background:#fff;border-radius:2px"></div>
<div class="t" style="left:486.2px;top:95.21px;font-size:4.6px;color:#555;">Люди</div>
<svg class="a" style="left:551.0px;top:94.8px;" width="4" height="4" viewBox="0 0 4 4"><path d="M0.3 0.3 L3.7 3.7 M3.7 0.3 L0.3 3.7" stroke="#555" stroke-width="0.6"/></svg>
<svg class="a" style="left:484.5px;top:107.3px;" width="4" height="4" viewBox="0 0 4 4"><rect x="0.3" y="0.3" width="3.4" height="3.4" fill="none" stroke="#666" stroke-width="0.5"/><path d="M0.3 1.5 H3.7" stroke="#666" stroke-width="0.5"/></svg>
<div class="t" style="left:491.5px;top:108.14px;font-size:3.5px;color:#666;">Записати присутніх</div>
<svg class="a" style="left:484.5px;top:117.3px;" width="4" height="4" viewBox="0 0 4 4"><circle cx="1.8" cy="1.2" r="1" fill="none" stroke="#666" stroke-width="0.5"/><path d="M0.2 3.8 Q1.8 1.8 3.4 3.8" fill="none" stroke="#666" stroke-width="0.5"/><path d="M3 1.2 H4.4 M3.7 0.5 V1.9" stroke="#666" stroke-width="0.4"/></svg>
<div class="t" style="left:491.5px;top:118.14px;font-size:3.5px;color:#666;">Додати людей</div>
<div class="a" style="left:556.5px;top:141.3px;width:0.8px;height:76px;background:#d8d8d8;"></div>
<svg class="a" style="left:485.0px;top:128.3px;" width="8" height="8" viewBox="0 0 8 8"><circle cx="4" cy="4" r="3.8" fill="#5a4034"/><circle cx="4" cy="3.3" r="1.5" fill="#c9b8a8" opacity="0.6"/></svg>
<div class="t" style="left:495.5px;top:130.51px;font-size:3.3px;color:#555;">Александр Михайлович...</div>
<div class="t" style="left:495.5px;top:134.30px;font-size:2.6px;color:#888;">Ваша презентація</div>
<svg class="a" style="left:536.5px;top:130.3px;" width="4" height="4" viewBox="0 0 4 4"><path d="M0.3 0.3 L3.7 3.7" stroke="#666" stroke-width="0.5"/><rect x="1.4" y="0.2" width="1.2" height="2.4" rx="0.6" fill="#666"/></svg>
<svg class="a" style="left:548.0px;top:130.10000000000002px;" width="1.2" height="5" viewBox="0 0 1.2 5"><circle cx="0.6" cy="0.6" r="0.5" fill="#666"/><circle cx="0.6" cy="2.3" r="0.5" fill="#666"/><circle cx="0.6" cy="4" r="0.5" fill="#666"/></svg>
<svg class="a" style="left:485.0px;top:140.5px;" width="8" height="8" viewBox="0 0 8 8"><circle cx="4" cy="4" r="3.8" fill="#2d2b2a"/><circle cx="4" cy="3.3" r="1.5" fill="#c9b8a8" opacity="0.6"/></svg>
<div class="t" style="left:495.5px;top:143.82px;font-size:3.4px;color:#666;">Антон Самойленко</div>
<svg class="a" style="left:536.5px;top:142.5px;" width="4" height="4" viewBox="0 0 4 4"><path d="M0.3 0.3 L3.7 3.7" stroke="#666" stroke-width="0.5"/><rect x="1.4" y="0.2" width="1.2" height="2.4" rx="0.6" fill="#666"/></svg>
<svg class="a" style="left:548.0px;top:142.3px;" width="1.2" height="5" viewBox="0 0 1.2 5"><circle cx="0.6" cy="0.6" r="0.5" fill="#666"/><circle cx="0.6" cy="2.3" r="0.5" fill="#666"/><circle cx="0.6" cy="4" r="0.5" fill="#666"/></svg>
<svg class="a" style="left:485.0px;top:152.70000000000002px;" width="8" height="8" viewBox="0 0 8 8"><circle cx="4" cy="4" r="3.8" fill="#7b93a8"/><text x="4" y="5.4" font-size="4" text-anchor="middle" font-family="Liberation Sans" fill="#fff">А</text></svg>
<div class="t" style="left:495.5px;top:156.02px;font-size:3.4px;color:#666;">Артем Гапалов</div>
<svg class="a" style="left:536.5px;top:154.70000000000002px;" width="4" height="4" viewBox="0 0 4 4"><path d="M0.3 0.3 L3.7 3.7" stroke="#666" stroke-width="0.5"/><rect x="1.4" y="0.2" width="1.2" height="2.4" rx="0.6" fill="#666"/></svg>
<svg class="a" style="left:548.0px;top:154.50000000000003px;" width="1.2" height="5" viewBox="0 0 1.2 5"><circle cx="0.6" cy="0.6" r="0.5" fill="#666"/><circle cx="0.6" cy="2.3" r="0.5" fill="#666"/><circle cx="0.6" cy="4" r="0.5" fill="#666"/></svg>
<svg class="a" style="left:485.0px;top:164.9px;" width="8" height="8" viewBox="0 0 8 8"><circle cx="4" cy="4" r="3.8" fill="#5b3fbf"/><text x="4" y="5.4" font-size="4" text-anchor="middle" font-family="Liberation Sans" fill="#fff">А</text></svg>
<div class="t" style="left:495.5px;top:168.22px;font-size:3.4px;color:#666;">Артем Остальцовий</div>
<svg class="a" style="left:536.5px;top:166.9px;" width="4" height="4" viewBox="0 0 4 4"><path d="M0.3 0.3 L3.7 3.7" stroke="#666" stroke-width="0.5"/><rect x="1.4" y="0.2" width="1.2" height="2.4" rx="0.6" fill="#666"/></svg>
<svg class="a" style="left:548.0px;top:166.70000000000002px;" width="1.2" height="5" viewBox="0 0 1.2 5"><circle cx="0.6" cy="0.6" r="0.5" fill="#666"/><circle cx="0.6" cy="2.3" r="0.5" fill="#666"/><circle cx="0.6" cy="4" r="0.5" fill="#666"/></svg>
<svg class="a" style="left:485.0px;top:177.10000000000002px;" width="8" height="8" viewBox="0 0 8 8"><circle cx="4" cy="4" r="3.8" fill="#5c5c5c"/><circle cx="4" cy="3.3" r="1.5" fill="#c9b8a8" opacity="0.6"/></svg>
<div class="t" style="left:495.5px;top:180.42px;font-size:3.4px;color:#666;">Борис Бабицкий</div>
<svg class="a" style="left:536.5px;top:179.10000000000002px;" width="4" height="4" viewBox="0 0 4 4"><path d="M0.3 0.3 L3.7 3.7" stroke="#666" stroke-width="0.5"/><rect x="1.4" y="0.2" width="1.2" height="2.4" rx="0.6" fill="#666"/></svg>
<svg class="a" style="left:548.0px;top:178.90000000000003px;" width="1.2" height="5" viewBox="0 0 1.2 5"><circle cx="0.6" cy="0.6" r="0.5" fill="#666"/><circle cx="0.6" cy="2.3" r="0.5" fill="#666"/><circle cx="0.6" cy="4" r="0.5" fill="#666"/></svg>
<svg class="a" style="left:485.0px;top:189.3px;" width="8" height="8" viewBox="0 0 8 8"><circle cx="4" cy="4" r="3.8" fill="#3a7d2c"/><text x="4" y="5.4" font-size="4" text-anchor="middle" font-family="Liberation Sans" fill="#fff">Д</text></svg>
<div class="t" style="left:495.5px;top:192.62px;font-size:3.4px;color:#666;">Дарина Жосовна</div>
<svg class="a" style="left:536.5px;top:191.3px;" width="4" height="4" viewBox="0 0 4 4"><path d="M0.3 0.3 L3.7 3.7" stroke="#666" stroke-width="0.5"/><rect x="1.4" y="0.2" width="1.2" height="2.4" rx="0.6" fill="#666"/></svg>
<svg class="a" style="left:548.0px;top:191.10000000000002px;" width="1.2" height="5" viewBox="0 0 1.2 5"><circle cx="0.6" cy="0.6" r="0.5" fill="#666"/><circle cx="0.6" cy="2.3" r="0.5" fill="#666"/><circle cx="0.6" cy="4" r="0.5" fill="#666"/></svg>
<svg class="a" style="left:485.0px;top:201.5px;" width="8" height="8" viewBox="0 0 8 8"><circle cx="4" cy="4" r="3.8" fill="#1a5fa8"/><text x="4" y="5.4" font-size="4" text-anchor="middle" font-family="Liberation Sans" fill="#fff">Д</text></svg>
<div class="t" style="left:495.5px;top:204.82px;font-size:3.4px;color:#666;">Дарина Коломєєва</div>
<svg class="a" style="left:536.5px;top:203.5px;" width="4" height="4" viewBox="0 0 4 4"><path d="M0.3 0.3 L3.7 3.7" stroke="#666" stroke-width="0.5"/><rect x="1.4" y="0.2" width="1.2" height="2.4" rx="0.6" fill="#666"/></svg>
<svg class="a" style="left:548.0px;top:203.3px;" width="1.2" height="5" viewBox="0 0 1.2 5"><circle cx="0.6" cy="0.6" r="0.5" fill="#666"/><circle cx="0.6" cy="2.3" r="0.5" fill="#666"/><circle cx="0.6" cy="4" r="0.5" fill="#666"/></svg>
<svg class="a" style="left:485.0px;top:213.7px;" width="8" height="8" viewBox="0 0 8 8"><circle cx="4" cy="4" r="3.8" fill="#1a5fa8"/><text x="4" y="5.4" font-size="4" text-anchor="middle" font-family="Liberation Sans" fill="#fff">Д</text></svg>
<div class="t" style="left:495.5px;top:217.02px;font-size:3.4px;color:#666;">Даша Рузанова</div>
<svg class="a" style="left:536.5px;top:215.7px;" width="4" height="4" viewBox="0 0 4 4"><path d="M0.3 0.3 L3.7 3.7" stroke="#666" stroke-width="0.5"/><rect x="1.4" y="0.2" width="1.2" height="2.4" rx="0.6" fill="#666"/></svg>
<svg class="a" style="left:548.0px;top:215.5px;" width="1.2" height="5" viewBox="0 0 1.2 5"><circle cx="0.6" cy="0.6" r="0.5" fill="#666"/><circle cx="0.6" cy="2.3" r="0.5" fill="#666"/><circle cx="0.6" cy="4" r="0.5" fill="#666"/></svg>
<div class="a" style="left:228px;top:237px;width:334px;height:7px;background:#dee1e6;"></div>
<div class="a" style="left:228px;top:244px;width:334px;height:10px;background:#fff;"></div>
<svg class="a" style="left:232px;top:239px;" width="3" height="3" viewBox="0 0 3 3"><circle cx="1.5" cy="1.5" r="1.3" fill="#666"/></svg>
<div class="t" style="left:237px;top:239.83px;font-size:2.8px;color:#444;">Нова вкладка</div>
<svg class="a" style="left:277px;top:239.2px;" width="2.5" height="2.5" viewBox="0 0 2.5 2.5"><path d="M0.4 0.4 L2.1 2.1 M2.1 0.4 L0.4 2.1" stroke="#555" stroke-width="0.4"/></svg>
<div class="a" style="left:281px;top:238px;width:0.5px;height:5px;background:#aaa;"></div>
<svg class="a" style="left:284px;top:238.8px;" width="3.5" height="3.5" viewBox="0 0 3.5 3.5"><rect width="3.5" height="3.5" rx="0.5" fill="#2f6fd8"/></svg>
<div class="t" style="left:290px;top:239.83px;font-size:2.8px;color:#444;">Уроки 10 вимови чудово</div>
<svg class="a" style="left:329.5px;top:239.2px;" width="2.5" height="2.5" viewBox="0 0 2.5 2.5"><path d="M0.4 0.4 L2.1 2.1 M2.1 0.4 L0.4 2.1" stroke="#555" stroke-width="0.4"/></svg>
<div class="a" style="left:334px;top:237px;width:40px;height:7px;background:#fff;border-radius:1.5px 1.5px 0 0"></div>
<svg class="a" style="left:336.5px;top:238.8px;" width="4" height="3.5" viewBox="0 0 4 3.5"><rect width="4" height="3.5" rx="0.5" fill="#34a853"/><rect x="1" y="1" width="3" height="1.5" fill="#fbbc04"/></svg>
<div class="t" style="left:342.5px;top:239.83px;font-size:2.8px;color:#444;">Meet - yxhi-iiihhi-ysrz</div>
<svg class="a" style="left:375.5px;top:239px;" width="3" height="3" viewBox="0 0 3 3"><circle cx="1.5" cy="1.5" r="1.3" fill="#d93025"/></svg>
<svg class="a" style="left:379.5px;top:239.2px;" width="2.5" height="2.5" viewBox="0 0 2.5 2.5"><path d="M0.4 0.4 L2.1 2.1 M2.1 0.4 L0.4 2.1" stroke="#555" stroke-width="0.4"/></svg>
<svg class="a" style="left:388.5px;top:238.5px;" width="4" height="4" viewBox="0 0 4 4"><path d="M2 0.3 V3.7 M0.3 2 H3.7" stroke="#444" stroke-width="0.6"/></svg>
<svg class="a" style="left:526px;top:238.8px;" width="3" height="3" viewBox="0 0 3 3"><path d="M0.3 0.8 L1.5 2 L2.7 0.8" fill="none" stroke="#555" stroke-width="0.5"/></svg>
<svg class="a" style="left:536px;top:238.8px;" width="3" height="3" viewBox="0 0 3 3"><path d="M0.3 1.5 H2.7" stroke="#555" stroke-width="0.5"/></svg>
<svg class="a" style="left:546px;top:238.8px;" width="3" height="3" viewBox="0 0 3 3"><rect x="0.3" y="0.3" width="2.4" height="2.4" fill="none" stroke="#555" stroke-width="0.5"/></svg>
<svg class="a" style="left:556px;top:238.8px;" width="3" height="3" viewBox="0 0 3 3"><path d="M0.2 0.2 L2.8 2.8 M2.8 0.2 L0.2 2.8" stroke="#555" stroke-width="0.5"/></svg>
<svg class="a" style="left:231.5px;top:246.5px;" width="3" height="3" viewBox="0 0 3 3"><path d="M2.5 1.5 H0.5 M1.5 0.5 L0.5 1.5 L1.5 2.5" fill="none" stroke="#bbb" stroke-width="0.5"/></svg>
<svg class="a" style="left:238.5px;top:246.5px;" width="3" height="3" viewBox="0 0 3 3"><path d="M0.5 1.5 H2.5 M1.5 0.5 L2.5 1.5 L1.5 2.5" fill="none" stroke="#bbb" stroke-width="0.5"/></svg>
<svg class="a" style="left:245.5px;top:246.5px;" width="3.5" height="3.5" viewBox="0 0 3.5 3.5"><path d="M3 1.8 A1.3 1.3 0 1 1 2.2 0.5" fill="none" stroke="#555" stroke-width="0.5"/></svg>
<div class="a" style="left:251px;top:244.5px;width:248px;height:7.5px;background:#f5f6f7;border-radius:4px"></div>
<svg class="a" style="left:253.5px;top:246.6px;" width="2.5" height="3" viewBox="0 0 2.5 3"><rect x="0" y="1.2" width="2.5" height="1.8" fill="#444"/><path d="M0.6 1.2 V0.7 A0.65 0.65 0 0 1 1.9 0.7 V1.2" fill="none" stroke="#444" stroke-width="0.4"/></svg>
<div class="t" style="left:258.5px;top:247.06px;font-size:3px;color:#555;">meet.google.com/yxhi-iiihhi-ysrz</div>
<div class="a" style="left:513px;top:247px;width:3px;height:3px;background:#444;border-radius:0.5px"></div>
<div class="a" style="left:519.5px;top:247px;width:3px;height:3px;background:#bbb;border-radius:0.5px"></div>
<div class="a" style="left:526.5px;top:247px;width:3px;height:3px;background:#999;border-radius:0.5px"></div>
<div class="a" style="left:535px;top:247px;width:3px;height:3px;background:#444;border-radius:0.5px"></div>
<div class="a" style="left:542px;top:247px;width:3px;height:3px;background:#444;border-radius:0.5px"></div>
<svg class="a" style="left:548px;top:246px;" width="5" height="5" viewBox="0 0 5 5"><circle cx="2.5" cy="2.5" r="2.4" fill="#5a3a28"/><circle cx="2.5" cy="2.5" r="1.2" fill="#e8e0d8"/></svg>
<svg class="a" style="left:557.5px;top:246.5px;" width="1" height="4" viewBox="0 0 1 4"><circle cx="0.5" cy="0.5" r="0.4" fill="#555"/><circle cx="0.5" cy="2" r="0.4" fill="#555"/><circle cx="0.5" cy="3.5" r="0.4" fill="#555"/></svg>
<div class="a" style="left:228px;top:259px;width:334px;height:142px;background:#202124;border:1px solid #131416"></div>
<div class="a" style="left:232px;top:262px;width:245px;height:9px;background:#35373a;border-radius:1px"></div>
<svg class="a" style="left:235px;top:264px;" width="5" height="5" viewBox="0 0 5 5"><rect x="0.3" y="0.3" width="4.4" height="4" fill="none" stroke="#ddd" stroke-width="0.6"/><rect x="1.5" y="1.3" width="2" height="2" fill="#ddd"/></svg>
<div class="t" style="left:243.5px;top:265.81px;font-size:3.3px;color:#e8eaed;">Вы показуєте презентацію для всіх</div>
<div class="t" style="left:-525px;width:1000px;text-align:right;top:265.69px;font-size:3.2px;color:#a8c7fa;">Зупинити презентацію</div>
<div class="a" style="left:268.7px;top:276.3px;width:171px;height:91.7px;background:#fff;"></div>
<div class="a" style="left:271px;top:280.5px;width:3px;height:3px;background:#eee;border:0.5px solid #ccc"></div>
<svg class="a" style="left:270.5px;top:287.5px;" width="4" height="4" viewBox="0 0 4 4"><circle cx="2" cy="2" r="1.7" fill="#e0323c"/></svg>
<div class="a" style="left:276px;top:280px;width:73.5px;height:71px;background:#cfcfcf;background:radial-gradient(ellipse at 55% 45%,#e4e4e4,#bdbdbd)"></div>
<div class="a" style="left:276.5px;top:280px;width:1px;height:71px;background:#9fd3e6;"></div>
<div class="a" style="left:298.7px;top:287.4px;width:35.6px;height:6.2px;background:#f2d21b;"></div>
<div class="t" style="left:279.2px;top:285.2px;font-size:7.6px;font-weight:bold;color:#1e1e1e;transform:scaleX(0.82);transform-origin:0 0">БУДЬ</div>
<div class="t" style="left:299.8px;top:285.2px;font-size:7.6px;font-weight:bold;color:#1e1e1e;transform:scaleX(0.825);transform-origin:0 0">ПОМІТНИМ</div>
<svg class="a" style="left:335px;top:288px;" width="14" height="14" viewBox="0 0 14 14"><circle cx="7" cy="7" r="7" fill="#fff" stroke="#ccc" stroke-width="0.3"/><path d="M4.199999999999999 3.15 Q7 1.4000000000000001 9.8 3.15 L12.600000000000001 6.3 L12.04 11.549999999999999 H1.9599999999999995 L1.3999999999999995 6.3Z" fill="#8ad830" stroke="#4a7a10" stroke-width="0.35"/><path d="M7 2.4499999999999997 V11.549999999999999" stroke="#4a7a10" stroke-width="0.3"/></svg>
<svg class="a" style="left:323.3px;top:298.8px;" width="14.4" height="14.4" viewBox="0 0 14.4 14.4"><circle cx="7.2" cy="7.2" r="7.2" fill="#fff" stroke="#ccc" stroke-width="0.3"/><path d="M4.32 3.24 Q7.2 1.4400000000000002 10.08 3.24 L12.96 6.48 L12.384 11.879999999999999 H2.0159999999999996 L1.4399999999999995 6.48Z" fill="#fafafa" stroke="#444" stroke-width="0.35"/><path d="M7.2 2.52 V11.879999999999999" stroke="#444" stroke-width="0.3"/></svg>
<svg class="a" style="left:313.5px;top:308px;" width="14" height="14" viewBox="0 0 14 14"><path d="M4.199999999999999 3.15 Q7 1.4000000000000001 9.8 3.15 L12.600000000000001 6.3 L12.04 11.549999999999999 H1.9599999999999995 L1.3999999999999995 6.3Z" fill="#f0d040" stroke="#a08010" stroke-width="0.35"/><path d="M7 2.4499999999999997 V11.549999999999999" stroke="#a08010" stroke-width="0.3"/></svg>
<svg class="a" style="left:301.3px;top:315.8px;" width="14.4" height="14.4" viewBox="0 0 14.4 14.4"><path d="M4.32 3.24 Q7.2 1.4400000000000002 10.08 3.24 L12.96 6.48 L12.384 11.879999999999999 H2.0159999999999996 L1.4399999999999995 6.48Z" fill="#d42038" stroke="#701020" stroke-width="0.35"/><path d="M7.2 2.52 V11.879999999999999" stroke="#701020" stroke-width="0.3"/></svg>
<svg class="a" style="left:290.2px;top:325.2px;" width="13.6" height="13.6" viewBox="0 0 13.6 13.6"><path d="M4.08 3.06 Q6.8 1.36 9.52 3.06 L12.24 6.12 L11.696 11.219999999999999 H1.9039999999999995 L1.3599999999999994 6.12Z" fill="#2e55b8" stroke="#102060" stroke-width="0.35"/><path d="M6.8 2.38 V11.219999999999999" stroke="#102060" stroke-width="0.3"/></svg>
<svg class="a" style="left:276.8px;top:331.3px;" width="14.4" height="14.4" viewBox="0 0 14.4 14.4"><path d="M4.32 3.24 Q7.2 1.4400000000000002 10.08 3.24 L12.96 6.48 L12.384 11.879999999999999 H2.0159999999999996 L1.4399999999999995 6.48Z" fill="#151515" stroke="#000" stroke-width="0.35"/><path d="M7.2 2.52 V11.879999999999999" stroke="#000" stroke-width="0.3"/></svg>
<div class="a" style="left:295px;top:302px;width:28px;height:4.2px;background:#2a2a2a;border:0.5px solid #e8c820"></div>
<div class="t" style="left:-191px;width:1000px;text-align:center;top:303.25px;font-size:2.3px;color:#f2d21b;font-weight:bold">ОБЕРИ СВІЙ ОДЯГ</div>
<div class="t" style="left:338px;top:305.74px;font-size:2.2px;color:#c01818;font-weight:bold">100</div>
<div class="t" style="left:337px;top:310.80px;font-size:2.6px;color:#222;font-weight:bold">метрів</div>
<div class="t" style="left:327px;top:312.00px;font-size:2.6px;color:#222;font-weight:bold">50 метрів</div>
<div class="t" style="left:317px;top:321.00px;font-size:2.6px;color:#222;font-weight:bold">30 метрів</div>
<div class="t" style="left:305px;top:330.00px;font-size:2.6px;color:#222;font-weight:bold">25 метрів</div>
<div class="t" style="left:295px;top:335.60px;font-size:2.6px;color:#222;font-weight:bold">11 метрів</div>
<div class="t" style="left:280px;top:345.80px;font-size:2.6px;color:#222;font-weight:bold">8-10 метрів</div>
<div class="a" style="left:312px;top:337px;width:18px;height:4px;background:#2a2a2a;border:0.5px solid #e8c820"></div>
<div class="t" style="left:-179px;width:1000px;text-align:center;top:338.34px;font-size:2.2px;color:#f2d21b;font-weight:bold">ВИДИМІСТЬ</div>
<svg class="a" style="left:318px;top:329px;" width="8" height="7" viewBox="0 0 8 7"><path d="M0.5 0.5 Q6 0.5 7 6" fill="none" stroke="#444" stroke-width="0.5"/></svg>
<svg class="a" style="left:300px;top:306px;" width="10" height="7" viewBox="0 0 10 7"><path d="M0.5 0.5 Q1 6 9 6" fill="none" stroke="#444" stroke-width="0.5"/></svg>
<div class="a" style="left:331px;top:345.3px;width:17px;height:4.5px;background:#e4e8ee;"></div>
<div class="t" style="left:-160.5px;width:1000px;text-align:center;top:346.53px;font-size:2.8px;color:#3d4f8c;font-weight:bold">ІНФОРМАЦІЯ</div>
<svg class="a" style="left:325px;top:345px;" width="4.5" height="4.5" viewBox="0 0 4.5 4.5"><circle cx="2.25" cy="2.25" r="2" fill="#a0a0a0"/></svg>
<div class="a" style="left:276px;top:351px;width:45px;height:6px;background:#3cb4d4;"></div>
<div class="a" style="left:290px;top:353.5px;width:30px;height:1.2px;background:#8fd39b;"></div>
<div class="a" style="left:321px;top:353.5px;width:16px;height:1.2px;background:#e3ee9a;"></div>
<div class="a" style="left:283px;top:358.5px;width:63px;height:1.2px;background:#d7ec9a;"></div>
<div class="a" style="left:349.5px;top:276.4px;width:90.5px;height:90px;background:#dcf0f8;"></div>
<svg class="a" style="left:351.8px;top:285px;" width="2" height="2" viewBox="0 0 2 2"><circle cx="1" cy="1" r="0.8" fill="#3a9ad0"/></svg>
<svg class="a" style="left:351.8px;top:313.3px;" width="2" height="2" viewBox="0 0 2 2"><circle cx="1" cy="1" r="0.8" fill="#3a9ad0"/></svg>
<div class="a" style="left:357.5px;top:284.15px;width:80px;font-family:'Liberation Serif';font-size:3.8px;line-height:1;color:#1e2838;white-space:nowrap;text-align:justify;text-align-last:justify">4. У темну пору доби та в умовах</div>
<div class="a" style="left:357.5px;top:288.12px;width:80px;font-family:'Liberation Serif';font-size:3.8px;line-height:1;color:#1e2838;white-space:nowrap;text-align:justify;text-align-last:justify">недостатньої видимості пішоходи, які</div>
<div class="a" style="left:357.5px;top:292.09px;width:80px;font-family:'Liberation Serif';font-size:3.8px;line-height:1;color:#1e2838;white-space:nowrap;text-align:justify;text-align-last:justify">рухаються проїзною частиною чи узбіччям,</div>
<div class="a" style="left:357.5px;top:296.06px;width:80px;font-family:'Liberation Serif';font-size:3.8px;line-height:1;color:#1e2838;white-space:nowrap;text-align:justify;text-align-last:justify">повинні виділити себе – мати на</div>
<div class="a" style="left:357.5px;top:300.03px;width:80px;font-family:'Liberation Serif';font-size:3.8px;line-height:1;color:#1e2838;white-space:nowrap;text-align:justify;text-align-last:justify">зовнішньому одязі світлоповертаючі</div>
<div class="a" style="left:357.5px;top:304.00px;width:80px;font-family:'Liberation Serif';font-size:3.8px;line-height:1;color:#1e2838;white-space:nowrap;text-align:justify;text-align-last:justify">елементи, для своєчасного їх виявлення</div>
<div class="a" style="left:357.5px;top:307.97px;width:80px;font-family:'Liberation Serif';font-size:3.8px;line-height:1;color:#1e2838;white-space:nowrap;text-align:left">водієм учасниками дорожнього руху.</div>
<div class="a" style="left:357.5px;top:312.45px;width:80px;font-family:'Liberation Serif';font-size:3.8px;line-height:1;color:#1e2838;white-space:nowrap;text-align:justify;text-align-last:justify">5. Рух організованих груп людей по дорозі</div>
<div class="a" style="left:357.5px;top:316.39px;width:80px;font-family:'Liberation Serif';font-size:3.8px;line-height:1;color:#1e2838;white-space:nowrap;text-align:justify;text-align-last:justify">дозволяється тільки в напрямку руху</div>
<div class="a" style="left:357.5px;top:320.33px;width:80px;font-family:'Liberation Serif';font-size:3.8px;line-height:1;color:#1e2838;white-space:nowrap;text-align:justify;text-align-last:justify">транспортних засобів колоною не більш як по</div>
<div class="a" style="left:357.5px;top:324.27px;width:80px;font-family:'Liberation Serif';font-size:3.8px;line-height:1;color:#1e2838;white-space:nowrap;text-align:justify;text-align-last:justify">чотири особи в ряду за умови, що колона не</div>
<div class="a" style="left:357.5px;top:328.21px;width:80px;font-family:'Liberation Serif';font-size:3.8px;line-height:1;color:#1e2838;white-space:nowrap;text-align:justify;text-align-last:justify">займає більше половини ширини проїзної</div>
<div class="a" style="left:357.5px;top:332.15px;width:80px;font-family:'Liberation Serif';font-size:3.8px;line-height:1;color:#1e2838;white-space:nowrap;text-align:justify;text-align-last:justify">частини одного напрямку руху. Попереду і</div>
<div class="a" style="left:357.5px;top:336.09px;width:80px;font-family:'Liberation Serif';font-size:3.8px;line-height:1;color:#1e2838;white-space:nowrap;text-align:justify;text-align-last:justify">позаду колони на відстані 10-15 м з лівого</div>
<div class="a" style="left:357.5px;top:340.03px;width:80px;font-family:'Liberation Serif';font-size:3.8px;line-height:1;color:#1e2838;white-space:nowrap;text-align:justify;text-align-last:justify">боку повинні бути супроводжуючі з червоними</div>
<div class="a" style="left:357.5px;top:343.97px;width:80px;font-family:'Liberation Serif';font-size:3.8px;line-height:1;color:#1e2838;white-space:nowrap;text-align:justify;text-align-last:justify">прапорцями, а у темну пору доби та в умовах</div>
<div class="a" style="left:357.5px;top:347.91px;width:80px;font-family:'Liberation Serif';font-size:3.8px;line-height:1;color:#1e2838;white-space:nowrap;text-align:justify;text-align-last:justify">недостатньої видимості - із засвіченими</div>
<div class="a" style="left:357.5px;top:351.85px;width:80px;font-family:'Liberation Serif';font-size:3.8px;line-height:1;color:#1e2838;white-space:nowrap;text-align:justify;text-align-last:justify">ліхтарями: спереду - білого кольору, позаду -</div>
<div class="a" style="left:357.5px;top:355.79px;width:80px;font-family:'Liberation Serif';font-size:3.8px;line-height:1;color:#1e2838;white-space:nowrap;text-align:left">червоного.</div>
<div class="a" style="left:231.7px;top:370px;width:32.5px;height:27px;background:#3c4043;border-radius:2.5px"></div>
<svg class="a" style="left:257.2px;top:373px;" width="3" height="4" viewBox="0 0 3 4"><path d="M0.3 0.3 L2.7 3.7" stroke="#ddd" stroke-width="0.5"/><rect x="0.9" y="0.3" width="1.2" height="2.2" rx="0.6" fill="#e8e8e8"/></svg>
<div class="t" style="left:-252.05px;width:1000px;text-align:center;top:392.21px;font-size:3.3px;color:#e8eaed;">Никита Новгор...</div>
<svg class="a" style="left:243px;top:379px;" width="10" height="10" viewBox="0 0 10 10"><circle cx="5" cy="5" r="4.9" fill="#000"/></svg>
<div class="a" style="left:266.8px;top:370px;width:33px;height:27px;background:#3c4043;border-radius:2.5px"></div>
<svg class="a" style="left:292.8px;top:373px;" width="3" height="4" viewBox="0 0 3 4"><path d="M0.3 0.3 L2.7 3.7" stroke="#ddd" stroke-width="0.5"/><rect x="0.9" y="0.3" width="1.2" height="2.2" rx="0.6" fill="#e8e8e8"/></svg>
<svg class="a" style="left:278.6px;top:379.3px;" width="10" height="10" viewBox="0 0 10 10"><circle cx="5" cy="5" r="4.9" fill="#5b3fbf"/><text x="5" y="6.9" font-size="5.4" text-anchor="middle" font-family="Liberation Sans" fill="#fff">Д</text></svg>
<div class="t" style="left:-216.7px;width:1000px;text-align:center;top:392.21px;font-size:3.3px;color:#e8eaed;">Денис Безкров...</div>
<div class="a" style="left:302px;top:370px;width:33px;height:27px;background:#3c4043;border-radius:2.5px"></div>
<svg class="a" style="left:328px;top:373px;" width="3" height="4" viewBox="0 0 3 4"><path d="M0.3 0.3 L2.7 3.7" stroke="#ddd" stroke-width="0.5"/><rect x="0.9" y="0.3" width="1.2" height="2.2" rx="0.6" fill="#e8e8e8"/></svg>
<svg class="a" style="left:313.8px;top:379.3px;" width="10" height="10" viewBox="0 0 10 10"><circle cx="5" cy="5" r="4.9" fill="#1a5fa8"/><text x="5" y="6.9" font-size="5.4" text-anchor="middle" font-family="Liberation Sans" fill="#fff">Д</text></svg>
<div class="t" style="left:-181.5px;width:1000px;text-align:center;top:392.21px;font-size:3.3px;color:#e8eaed;">Даша Рузанова</div>
<div class="a" style="left:337.5px;top:370px;width:33px;height:27px;background:#3c4043;border-radius:2.5px"></div>
<svg class="a" style="left:363.5px;top:373px;" width="3" height="4" viewBox="0 0 3 4"><path d="M0.3 0.3 L2.7 3.7" stroke="#ddd" stroke-width="0.5"/><rect x="0.9" y="0.3" width="1.2" height="2.2" rx="0.6" fill="#e8e8e8"/></svg>
<svg class="a" style="left:349.3px;top:379.3px;" width="10" height="10" viewBox="0 0 10 10"><circle cx="5" cy="5" r="4.9" fill="#e8591a"/><text x="5" y="6.9" font-size="5.4" text-anchor="middle" font-family="Liberation Sans" fill="#fff">М</text></svg>
<div class="t" style="left:-146.0px;width:1000px;text-align:center;top:392.21px;font-size:3.3px;color:#e8eaed;">Марія Метельс...</div>
<div class="a" style="left:373px;top:370px;width:33px;height:27px;background:#3c4043;border-radius:2.5px"></div>
<svg class="a" style="left:399px;top:373px;" width="3" height="4" viewBox="0 0 3 4"><path d="M0.3 0.3 L2.7 3.7" stroke="#ddd" stroke-width="0.5"/><rect x="0.9" y="0.3" width="1.2" height="2.2" rx="0.6" fill="#e8e8e8"/></svg>
<div class="t" style="left:-110.5px;width:1000px;text-align:center;top:392.21px;font-size:3.3px;color:#e8eaed;">Борис Бабиц...</div>
<svg class="a" style="left:384.5px;top:379px;" width="10" height="10" viewBox="0 0 10 10"><circle cx="4.5" cy="4.5" r="4.3" fill="#9a9a9a"/><circle cx="4.5" cy="5" r="2.6" fill="#2a2a2a"/><circle cx="4.5" cy="3.8" r="2" fill="#e0e0e0"/></svg>
<div class="a" style="left:408.5px;top:370px;width:33px;height:27px;background:#3c4043;border-radius:2.5px"></div>
<div class="t" style="left:-75.0px;width:1000px;text-align:center;top:386.71px;font-size:3.3px;color:#e8eaed;">Ще 7 осіб</div>
<svg class="a" style="left:418px;top:376.5px;" width="10" height="7" viewBox="0 0 10 7"><circle cx="7" cy="3" r="2.6" fill="#111" stroke="#777" stroke-width="0.3"/><circle cx="3.5" cy="3.5" r="3.2" fill="#d81b60"/><circle cx="3.5" cy="3.5" r="1" fill="#f5a0c0"/></svg>
<div class="a" style="left:444.5px;top:370px;width:32.5px;height:27px;background:#3c4043;border:1px solid #8ab4f8;border-radius:1.5px"></div>
<svg class="a" style="left:445.5px;top:371px;" width="30.5" height="25" viewBox="0 0 30.5 25"><rect width="30.5" height="25" fill="#cdc6b8"/><rect x="0" y="0" width="30.5" height="3" fill="#bdb4a4"/><path d="M0 14 Q8 12 16 15 L18 25 H0Z" fill="#a9c4c9"/><rect x="0" y="21" width="30.5" height="4" fill="#55524c"/><ellipse cx="17.5" cy="15.5" rx="2.8" ry="3.5" fill="#8d6a55"/><path d="M15 12.5 Q17.5 10.5 20 12.5" fill="none" stroke="#2a2220" stroke-width="1.2"/><path d="M10.5 25 Q12 18.5 17.5 19 Q23 18.5 24.5 25Z" fill="#2b2d33"/></svg>
<svg class="a" style="left:470px;top:371.5px;" width="5" height="5" viewBox="0 0 5 5"><circle cx="2.5" cy="2.5" r="2.4" fill="#1a73e8"/><circle cx="1.4" cy="2.5" r="0.35" fill="#fff"/><circle cx="2.5" cy="2.5" r="0.35" fill="#fff"/><circle cx="3.6" cy="2.5" r="0.35" fill="#fff"/></svg>
<div class="a" style="left:480.5px;top:262.4px;width:78.5px;height:134.6px;background:#fff;border-radius:2px"></div>
<div class="t" style="left:486.2px;top:268.31px;font-size:4.6px;color:#555;">Люди</div>
<svg class="a" style="left:551.0px;top:267.9px;" width="4" height="4" viewBox="0 0 4 4"><path d="M0.3 0.3 L3.7 3.7 M3.7 0.3 L0.3 3.7" stroke="#555" stroke-width="0.6"/></svg>
<svg class="a" style="left:484.5px;top:280.4px;" width="4" height="4" viewBox="0 0 4 4"><rect x="0.3" y="0.3" width="3.4" height="3.4" fill="none" stroke="#666" stroke-width="0.5"/><path d="M0.3 1.5 H3.7" stroke="#666" stroke-width="0.5"/></svg>
<div class="t" style="left:491.5px;top:281.24px;font-size:3.5px;color:#666;">Записати присутніх</div>
<svg class="a" style="left:484.5px;top:290.4px;" width="4" height="4" viewBox="0 0 4 4"><circle cx="1.8" cy="1.2" r="1" fill="none" stroke="#666" stroke-width="0.5"/><path d="M0.2 3.8 Q1.8 1.8 3.4 3.8" fill="none" stroke="#666" stroke-width="0.5"/><path d="M3 1.2 H4.4 M3.7 0.5 V1.9" stroke="#666" stroke-width="0.4"/></svg>
<div class="t" style="left:491.5px;top:291.24px;font-size:3.5px;color:#666;">Додати людей</div>
<div class="a" style="left:556.5px;top:345.4px;width:0.8px;height:50px;background:#d8d8d8;"></div>
<svg class="a" style="left:485.0px;top:301.4px;" width="8" height="8" viewBox="0 0 8 8"><circle cx="4" cy="4" r="3.8" fill="#1a5fa8"/><text x="4" y="5.4" font-size="4" text-anchor="middle" font-family="Liberation Sans" fill="#fff">Д</text></svg>
<div class="t" style="left:495.5px;top:304.72px;font-size:3.4px;color:#666;">Дарина Коломєєва</div>
<svg class="a" style="left:536.5px;top:303.4px;" width="4" height="4" viewBox="0 0 4 4"><path d="M0.3 0.3 L3.7 3.7" stroke="#666" stroke-width="0.5"/><rect x="1.4" y="0.2" width="1.2" height="2.4" rx="0.6" fill="#666"/></svg>
<svg class="a" style="left:548.0px;top:303.2px;" width="1.2" height="5" viewBox="0 0 1.2 5"><circle cx="0.6" cy="0.6" r="0.5" fill="#666"/><circle cx="0.6" cy="2.3" r="0.5" fill="#666"/><circle cx="0.6" cy="4" r="0.5" fill="#666"/></svg>
<svg class="a" style="left:485.0px;top:313.59999999999997px;" width="8" height="8" viewBox="0 0 8 8"><circle cx="4" cy="4" r="3.8" fill="#1a5fa8"/><text x="4" y="5.4" font-size="4" text-anchor="middle" font-family="Liberation Sans" fill="#fff">Д</text></svg>
<div class="t" style="left:495.5px;top:316.92px;font-size:3.4px;color:#666;">Даша Рузанова</div>
<svg class="a" style="left:536.5px;top:315.59999999999997px;" width="4" height="4" viewBox="0 0 4 4"><path d="M0.3 0.3 L3.7 3.7" stroke="#666" stroke-width="0.5"/><rect x="1.4" y="0.2" width="1.2" height="2.4" rx="0.6" fill="#666"/></svg>
<svg class="a" style="left:548.0px;top:315.4px;" width="1.2" height="5" viewBox="0 0 1.2 5"><circle cx="0.6" cy="0.6" r="0.5" fill="#666"/><circle cx="0.6" cy="2.3" r="0.5" fill="#666"/><circle cx="0.6" cy="4" r="0.5" fill="#666"/></svg>
<svg class="a" style="left:485.0px;top:325.79999999999995px;" width="8" height="8" viewBox="0 0 8 8"><circle cx="4" cy="4" r="3.8" fill="#5b3fbf"/><text x="4" y="5.4" font-size="4" text-anchor="middle" font-family="Liberation Sans" fill="#fff">Д</text></svg>
<div class="t" style="left:495.5px;top:329.12px;font-size:3.4px;color:#666;">Денис Безкровний</div>
<svg class="a" style="left:536.5px;top:327.79999999999995px;" width="4" height="4" viewBox="0 0 4 4"><path d="M0.3 0.3 L3.7 3.7" stroke="#666" stroke-width="0.5"/><rect x="1.4" y="0.2" width="1.2" height="2.4" rx="0.6" fill="#666"/></svg>
<svg class="a" style="left:548.0px;top:327.59999999999997px;" width="1.2" height="5" viewBox="0 0 1.2 5"><circle cx="0.6" cy="0.6" r="0.5" fill="#666"/><circle cx="0.6" cy="2.3" r="0.5" fill="#666"/><circle cx="0.6" cy="4" r="0.5" fill="#666"/></svg>
<svg class="a" style="left:485.0px;top:338.0px;" width="8" height="8" viewBox="0 0 8 8"><circle cx="4" cy="4" r="3.8" fill="#e8591a"/><text x="4" y="5.4" font-size="4" text-anchor="middle" font-family="Liberation Sans" fill="#fff">М</text></svg>
<div class="t" style="left:495.5px;top:341.32px;font-size:3.4px;color:#666;">Марія Метельська</div>
<svg class="a" style="left:536.5px;top:340.0px;" width="4" height="4" viewBox="0 0 4 4"><path d="M0.3 0.3 L3.7 3.7" stroke="#666" stroke-width="0.5"/><rect x="1.4" y="0.2" width="1.2" height="2.4" rx="0.6" fill="#666"/></svg>
<svg class="a" style="left:548.0px;top:339.8px;" width="1.2" height="5" viewBox="0 0 1.2 5"><circle cx="0.6" cy="0.6" r="0.5" fill="#666"/><circle cx="0.6" cy="2.3" r="0.5" fill="#666"/><circle cx="0.6" cy="4" r="0.5" fill="#666"/></svg>
<svg class="a" style="left:485.0px;top:350.2px;" width="8" height="8" viewBox="0 0 8 8"><circle cx="4" cy="4" r="3.8" fill="#000"/><text x="4" y="5.4" font-size="4" text-anchor="middle" font-family="Liberation Sans" fill="#fff"></text></svg>
<div class="t" style="left:495.5px;top:353.52px;font-size:3.4px;color:#666;">Нікита Новгородський</div>
<svg class="a" style="left:536.5px;top:352.2px;" width="4" height="4" viewBox="0 0 4 4"><path d="M0.3 0.3 L3.7 3.7" stroke="#666" stroke-width="0.5"/><rect x="1.4" y="0.2" width="1.2" height="2.4" rx="0.6" fill="#666"/></svg>
<svg class="a" style="left:548.0px;top:352.0px;" width="1.2" height="5" viewBox="0 0 1.2 5"><circle cx="0.6" cy="0.6" r="0.5" fill="#666"/><circle cx="0.6" cy="2.3" r="0.5" fill="#666"/><circle cx="0.6" cy="4" r="0.5" fill="#666"/></svg>
<svg class="a" style="left:485.0px;top:362.4px;" width="8" height="8" viewBox="0 0 8 8"><circle cx="4" cy="4" r="3.8" fill="#4a4a4a"/><circle cx="4" cy="3.3" r="1.5" fill="#c9b8a8" opacity="0.6"/></svg>
<div class="t" style="left:495.5px;top:365.72px;font-size:3.4px;color:#666;">Нікита Сидько</div>
<svg class="a" style="left:536.5px;top:364.4px;" width="4" height="4" viewBox="0 0 4 4"><path d="M0.3 0.3 L3.7 3.7" stroke="#666" stroke-width="0.5"/><rect x="1.4" y="0.2" width="1.2" height="2.4" rx="0.6" fill="#666"/></svg>
<svg class="a" style="left:548.0px;top:364.2px;" width="1.2" height="5" viewBox="0 0 1.2 5"><circle cx="0.6" cy="0.6" r="0.5" fill="#666"/><circle cx="0.6" cy="2.3" r="0.5" fill="#666"/><circle cx="0.6" cy="4" r="0.5" fill="#666"/></svg>
<svg class="a" style="left:485.0px;top:374.59999999999997px;" width="8" height="8" viewBox="0 0 8 8"><circle cx="4" cy="4" r="3.8" fill="#d81b60"/><text x="4" y="5.4" font-size="4" text-anchor="middle" font-family="Liberation Sans" fill="#fff">О</text></svg>
<div class="t" style="left:495.5px;top:377.92px;font-size:3.4px;color:#666;">Олександра Ушакова</div>
<svg class="a" style="left:536.5px;top:376.59999999999997px;" width="4" height="4" viewBox="0 0 4 4"><path d="M0.3 0.3 L3.7 3.7" stroke="#666" stroke-width="0.5"/><rect x="1.4" y="0.2" width="1.2" height="2.4" rx="0.6" fill="#666"/></svg>
<svg class="a" style="left:548.0px;top:376.4px;" width="1.2" height="5" viewBox="0 0 1.2 5"><circle cx="0.6" cy="0.6" r="0.5" fill="#666"/><circle cx="0.6" cy="2.3" r="0.5" fill="#666"/><circle cx="0.6" cy="4" r="0.5" fill="#666"/></svg>
<svg class="a" style="left:485.0px;top:386.79999999999995px;" width="8" height="8" viewBox="0 0 8 8"><circle cx="4" cy="4" r="3.8" fill="#5c4030"/><circle cx="4" cy="3.3" r="1.5" fill="#c9b8a8" opacity="0.6"/></svg>
<div class="t" style="left:495.5px;top:390.12px;font-size:3.4px;color:#666;">Саша Єгорів</div>
<svg class="a" style="left:536.5px;top:388.79999999999995px;" width="4" height="4" viewBox="0 0 4 4"><path d="M0.3 0.3 L3.7 3.7" stroke="#666" stroke-width="0.5"/><rect x="1.4" y="0.2" width="1.2" height="2.4" rx="0.6" fill="#666"/></svg>
<svg class="a" style="left:548.0px;top:388.59999999999997px;" width="1.2" height="5" viewBox="0 0 1.2 5"><circle cx="0.6" cy="0.6" r="0.5" fill="#666"/><circle cx="0.6" cy="2.3" r="0.5" fill="#666"/><circle cx="0.6" cy="4" r="0.5" fill="#666"/></svg>
<div class="t" style="left:591px;top:373.47px;font-size:10.2px;color:#b8b8b8;letter-spacing:0.1px">Активація Windows</div>
<div class="t" style="left:591px;top:386.94px;font-size:7.4px;color:#bdbdbd;">Перейдіть до розділу "Настройки", щоб активувати</div>
<div class="t" style="left:591px;top:396.54px;font-size:7.4px;color:#bdbdbd;">Windows.</div>
<div class="a" style="left:0px;top:414px;width:800px;height:11px;background:#f2f2f2;"></div>
<div class="a" style="left:0px;top:413.5px;width:800px;height:0.8px;background:#dedede;"></div>
<div class="t" style="left:3px;top:417.01px;font-size:5.3px;color:#555;">Страница 6 из 9</div>
<div class="t" style="left:50.7px;top:417.01px;font-size:5.3px;color:#555;">Число слов: 420</div>
<svg class="a" style="left:99px;top:416px;" width="8" height="6" viewBox="0 0 8 6"><rect x="0.3" y="0.3" width="5.5" height="5.4" fill="none" stroke="#777" stroke-width="0.5"/><path d="M3 0.3 V5.7" stroke="#777" stroke-width="0.5"/><rect x="6.3" y="1.5" width="1.2" height="1.2" fill="#777"/></svg>
<div class="t" style="left:114px;top:417.01px;font-size:5.3px;color:#555;">украинский</div>
<svg class="a" style="left:665px;top:416.3px;" width="5" height="5" viewBox="0 0 5 5"><path d="M0.3 0.5 H2.3 V4.5 H0.3Z M2.7 0.5 H4.7 V4.5 H2.7Z" fill="#aaa" stroke="#777" stroke-width="0.5"/></svg>
<div class="a" style="left:676.5px;top:414px;width:15.5px;height:11px;background:#cfcfcf;"></div>
<svg class="a" style="left:681px;top:416.3px;" width="7" height="6" viewBox="0 0 7 6"><rect x="0" y="0" width="7" height="6" fill="#8c8c8c"/><rect x="0.6" y="0.6" width="5.8" height="4.8" fill="#9c9c9c"/></svg>
<svg class="a" style="left:700px;top:416.3px;" width="6" height="5.5" viewBox="0 0 6 5.5"><rect x="0.3" y="0.3" width="4.4" height="4.4" fill="none" stroke="#666" stroke-width="0.5"/><path d="M1.2 1.6 H3.8 M1.2 2.8 H3.8" stroke="#777" stroke-width="0.4"/><circle cx="4.6" cy="4.4" r="1.2" fill="#f0f0f0" stroke="#666" stroke-width="0.4"/></svg>
<div class="a" style="left:711.5px;top:419px;width:3px;height:0.8px;background:#555;"></div>
<div class="a" style="left:718px;top:419.2px;width:52px;height:0.6px;background:#b4b4b4;"></div>
<div class="a" style="left:743px;top:416.7px;width:1.8px;height:5.2px;background:#555;"></div>
<div class="a" style="left:772px;top:419px;width:4px;height:0.8px;background:#555;"></div>
<div class="a" style="left:773.6px;top:417.4px;width:0.8px;height:4px;background:#555;"></div>
<div class="t" style="left:783px;top:417.10px;font-size:5.2px;color:#555;">100%</div>
<div class="a" style="left:0px;top:425px;width:800px;height:25px;background:#e2eaf7;background:linear-gradient(90deg,#e8eef9,#dfe8f8 55%,#e1e9f7)"></div>
<div class="a" style="left:0px;top:425px;width:800px;height:0.7px;background:#d2dbea;"></div>
<svg class="a" style="left:10.5px;top:432.5px;" width="13" height="9" viewBox="0 0 13 9"><path d="M3 8.5 Q0 8.5 0.3 6 Q0.6 4.2 2.6 4.4 Q3.3 1 6.8 1.2 Q9.8 1.5 10.2 4.6 Q12.7 4.8 12.7 6.7 Q12.6 8.5 10.5 8.5Z" fill="#b9cbea" stroke="#8fa8d2" stroke-width="0.5"/></svg>
<div class="t" style="left:26.8px;top:431.34px;font-size:5.5px;color:#222;">16°C</div>
<div class="t" style="left:26.8px;top:438.95px;font-size:6.2px;color:#5a5a5a;">Cloudy</div>
<svg class="a" style="left:243.5px;top:432px;" width="12.5" height="12" viewBox="0 0 12.5 12"><defs><linearGradient id="wl" x1="0" y1="0" x2="1" y2="1"><stop offset="0" stop-color="#4cc2ff"/><stop offset="1" stop-color="#0a6fd6"/></linearGradient></defs><rect x="0" y="0" width="5.8" height="5.6" fill="url(#wl)"/><rect x="6.5" y="0" width="5.8" height="5.6" fill="url(#wl)"/><rect x="0" y="6.3" width="5.8" height="5.6" fill="url(#wl)"/><rect x="6.5" y="6.3" width="5.8" height="5.6" fill="url(#wl)"/></svg>
<div class="a" style="left:263.5px;top:430.5px;width:113px;height:14.5px;background:#f4f7fc;border-radius:7.5px;border:0.6px solid #d5dcea"></div>
<svg class="a" style="left:268.5px;top:433.5px;" width="9" height="9" viewBox="0 0 9 9"><circle cx="3.6" cy="3.6" r="2.7" fill="none" stroke="#333" stroke-width="1"/><path d="M5.6 5.6 L7.8 7.8" stroke="#333" stroke-width="1.1"/></svg>
<div class="t" style="left:281.8px;top:434.65px;font-size:7.5px;color:#666;">Пошук</div>
<svg class="a" style="left:348px;top:431px;clip-path:inset(0 0 0 0 round 0 7px 7px 0)" width="28" height="13.5" viewBox="0 0 28 13.5"><path d="M0 13.5 L6 6 L10 9 L15 3 L21 8 L26 5 L28 13.5Z" fill="#4e9a5a"/><path d="M4 13.5 L10 8 L16 13.5Z" fill="#2e6a3a"/><circle cx="22" cy="4" r="2.5" fill="#f3d56b"/><path d="M16 13.5 Q20 9 24 13.5Z" fill="#88b8e8"/><circle cx="8" cy="5" r="1.8" fill="#f5f0e0"/></svg>
<svg class="a" style="left:383.5px;top:432.5px;" width="11" height="11" viewBox="0 0 11 11"><rect x="0.5" y="3" width="8" height="7.5" fill="#222"/><rect x="3" y="0.5" width="7.5" height="7.5" fill="#f3f3f3" stroke="#777" stroke-width="0.5"/></svg>
<svg class="a" style="left:406px;top:432px;" width="13" height="12" viewBox="0 0 13 12"><defs><linearGradient id="tm" x1="0" y1="0" x2="1" y2="1"><stop offset="0" stop-color="#7b83eb"/><stop offset="1" stop-color="#4b4fb8"/></linearGradient></defs><path d="M6.5 0.5 A5.8 5.5 0 1 1 2.5 10 L0.5 11.5 L1.2 8.5 A5.8 5.5 0 0 1 6.5 0.5Z" fill="url(#tm)"/><rect x="3.5" y="4" width="4.5" height="3.8" rx="0.6" fill="#fff"/><path d="M8 5 L10 4 V7.8 L8 6.8Z" fill="#fff"/></svg>
<svg class="a" style="left:429px;top:431.5px;" width="13.5" height="12" viewBox="0 0 13.5 12"><path d="M0 1.5 Q0 0.5 1 0.5 H5 L6.5 2 H12.5 Q13.5 2 13.5 3 V11 Q13.5 12 12.5 12 H1 Q0 12 0 11Z" fill="#f8c830"/><rect x="0" y="3.5" width="13.5" height="8.5" rx="0.8" fill="#ffd95a"/><rect x="3" y="7.5" width="7.5" height="2" fill="#1f7fd0"/></svg>
<div class="a" style="left:434.5px;top:447px;width:3px;height:1px;background:#777;border-radius:0.5px"></div>
<svg class="a" style="left:451.5px;top:431.5px;" width="13.5" height="13" viewBox="0 0 13.5 13"><defs><linearGradient id="eg" x1="0" y1="0" x2="1" y2="1"><stop offset="0" stop-color="#36c2a6"/><stop offset="0.5" stop-color="#1d8fe0"/><stop offset="1" stop-color="#0b54b8"/></linearGradient></defs><circle cx="6.75" cy="6.5" r="6.3" fill="url(#eg)"/><path d="M3 8 Q3 4.5 7 4.5 Q10.5 4.5 10.5 7.5 H5.5 Q6 10 9 10" fill="none" stroke="#fff" stroke-width="1.3" opacity="0.85"/></svg>
<div class="a" style="left:456.5px;top:447px;width:3px;height:1px;background:#777;border-radius:0.5px"></div>
<svg class="a" style="left:475px;top:431.5px;" width="12.5" height="12.5" viewBox="0 0 12.5 12.5"><rect x="0" y="2.5" width="12.5" height="10" rx="1.2" fill="#1b5aa8"/><path d="M4 2.5 V1.3 Q4 0.5 4.8 0.5 H7.7 Q8.5 0.5 8.5 1.3 V2.5" fill="none" stroke="#1b5aa8" stroke-width="0.8"/><rect x="3.8" y="5" width="2.2" height="2.2" fill="#f35325"/><rect x="6.5" y="5" width="2.2" height="2.2" fill="#81bc06"/><rect x="3.8" y="7.7" width="2.2" height="2.2" fill="#05a6f0"/><rect x="6.5" y="7.7" width="2.2" height="2.2" fill="#ffba08"/></svg>
<div class="a" style="left:495.5px;top:428px;width:17px;height:21px;background:#eef2fa;border-radius:2px"></div>
<svg class="a" style="left:497.5px;top:431.5px;" width="13" height="12.5" viewBox="0 0 13 12.5"><rect x="5" y="0.5" width="8" height="12" rx="0.8" fill="#fff" stroke="#8fb0e0" stroke-width="0.5"/><path d="M8 2.5 H12 M8 4.5 H12 M8 6.5 H12 M8 8.5 H12" stroke="#41a5ee" stroke-width="0.7"/><rect x="0" y="2.5" width="8" height="8" rx="0.8" fill="#2b5cb0"/><text x="4" y="8.8" font-size="6" text-anchor="middle" font-family="Liberation Sans" font-weight="bold" fill="#fff">W</text></svg>
<div class="a" style="left:500px;top:446.8px;width:8px;height:1.5px;background:#1a68c8;border-radius:1px"></div>
<svg class="a" style="left:521px;top:431.5px;" width="12.5" height="12.5" viewBox="0 0 12.5 12.5"><rect width="12.5" height="12.5" rx="1.5" fill="#b3141c"/><path d="M2.5 10 Q4.5 7 6.2 2.5 Q7.5 7 10.3 9.2 Q6.2 8.2 2.5 10Z" fill="none" stroke="#fff" stroke-width="0.9"/></svg>
<div class="a" style="left:526px;top:447px;width:3px;height:1px;background:#777;border-radius:0.5px"></div>
<svg class="a" style="left:544px;top:431.5px;" width="13.5" height="13" viewBox="0 0 13.5 13"><circle cx="6.5" cy="6.5" r="6.2" fill="#db4437"/><path d="M6.5 6.5 L12 3.4 A6.2 6.2 0 0 1 6.5 12.7Z" fill="#fbbc05"/><path d="M6.5 6.5 L6.5 12.7 A6.2 6.2 0 0 1 1 3.4Z" fill="#0f9d58"/><circle cx="6.5" cy="6.5" r="2.7" fill="#fff"/><circle cx="6.5" cy="6.5" r="2.1" fill="#4285f4"/><circle cx="10.5" cy="2.5" r="2.8" fill="#5a4034"/><text x="10.5" y="3.8" font-size="3.4" text-anchor="middle" font-family="Liberation Sans" fill="#fff">A</text></svg>
<div class="a" style="left:549px;top:447px;width:3px;height:1px;background:#777;border-radius:0.5px"></div>
<svg class="a" style="left:680.5px;top:435px;" width="6" height="3.5" viewBox="0 0 6 3.5"><path d="M0.5 3 L3 0.6 L5.5 3" fill="none" stroke="#222" stroke-width="1"/></svg>
<div class="t" style="left:697px;top:435.39px;font-size:5.8px;color:#222;">УКР</div>
<svg class="a" style="left:717.5px;top:433px;" width="9" height="9" viewBox="0 0 9 9"><rect x="0.5" y="1" width="6" height="6" fill="none" stroke="#222" stroke-width="0.7"/><path d="M3.5 7 V8.5 H1.5 M3.5 8.5 H5.5" stroke="#222" stroke-width="0.6"/><circle cx="6.5" cy="1.8" r="1.5" fill="#fff" stroke="#222" stroke-width="0.5"/></svg>
<svg class="a" style="left:731px;top:434.5px;" width="7" height="6" viewBox="0 0 7 6"><path d="M0.5 2 H2 L3.7 0.5 V5.5 L2 4 H0.5Z" fill="none" stroke="#222" stroke-width="0.6"/><path d="M5 1.5 Q6 3 5 4.5 M6 0.8 Q7.3 3 6 5.2" fill="none" stroke="#222" stroke-width="0.5"/></svg>
<svg class="a" style="left:743px;top:435px;" width="8" height="5" viewBox="0 0 8 5"><rect x="0.3" y="0.5" width="6.4" height="4" rx="0.6" fill="none" stroke="#222" stroke-width="0.6"/><rect x="1.2" y="1.3" width="2.5" height="2.4" fill="#222"/><rect x="7" y="1.8" width="0.8" height="1.4" fill="#222"/></svg>
<div class="t" style="left:-210px;width:1000px;text-align:right;top:430.52px;font-size:6px;color:#111;">10:07</div>
<div class="t" style="left:-210px;width:1000px;text-align:right;top:439.12px;font-size:6px;color:#111;">22.05.2023</div>
</body></html>
